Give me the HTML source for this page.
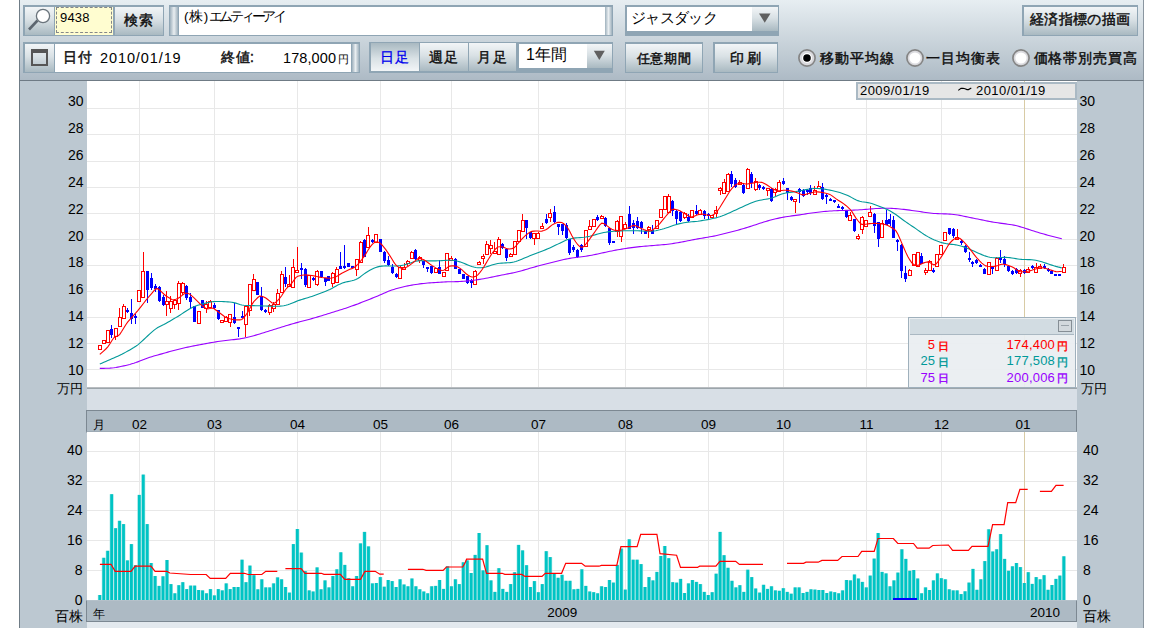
<!DOCTYPE html><html><head><meta charset="utf-8"><style>
*{margin:0;padding:0;box-sizing:border-box}
html,body{width:1151px;height:628px;overflow:hidden;background:#fff;font-family:"Liberation Sans",sans-serif;color:#000}
.a{position:absolute}
#tb{left:19px;top:0;width:1125px;height:81px;background:linear-gradient(#e7eef2,#d3dce2 35%,#c2cdd5 65%,#adbac5);border-left:1px solid #6f7c86;border-right:1px solid #8a96a0;border-bottom:1px solid #6f7b85}
.grp{background:#8fa5b4;}
.btn{background:linear-gradient(#f2f5f7,#d9e1e5 45%,#a9b9c1);font-weight:normal;-webkit-text-stroke:0.45px #111;font-size:13px;text-align:center;color:#111}
.bj{font-weight:normal;-webkit-text-stroke:0.45px #111;color:#111}
.btns{background:linear-gradient(#a9b9c1,#d9e1e5 55%,#f2f5f7);font-weight:bold;font-size:13px;text-align:center;color:#0000ee}
.grip{background:linear-gradient(90deg,#9fb1bd,#e9eef1 50%,#9fb1bd)}
.wh{background:#fff}
.lbl{font-size:13px;line-height:14px;color:#111}
</style></head><body>
<div id="tb" class="a"></div>
<div class="a grp" style="left:23px;top:5px;width:141px;height:31px"></div>
<div class="a btn" style="left:24.5px;top:6.5px;width:29px;height:28px"></div>
<svg class="a" style="left:24px;top:6px" width="30" height="29"><line x1="13.5" y1="14.5" x2="5" y2="23.5" stroke="#5c6670" stroke-width="2.6"/><circle cx="19" cy="10" r="6.6" fill="#fff" stroke="#6a747c" stroke-width="1.3"/></svg>
<div class="a" style="left:55px;top:6.5px;width:58px;height:28px;background:#fffdd0"></div>
<div class="a" style="left:56px;top:7px;width:56px;height:26px;border:1px dashed #858789"></div>
<div class="a" style="left:60px;top:11px;font-size:13px;line-height:14px;letter-spacing:0.2px">9438</div>
<div class="a btn" style="left:114.5px;top:6.5px;width:48px;height:28px;line-height:26px;font-size:14px;letter-spacing:1px;text-indent:1px">検索</div>
<div class="a grp" style="left:169px;top:5px;width:444px;height:31px"></div>
<div class="a grip" style="left:170px;top:6.5px;width:8px;height:28px"></div>
<div class="a wh" style="left:178.5px;top:6.5px;width:426px;height:28px"></div>
<div class="a grip" style="left:604.5px;top:6.5px;width:7px;height:28px"></div>
<div class="a" style="left:184px;top:8.5px;font-size:13.5px;line-height:15px;letter-spacing:-3.3px"><span style="letter-spacing:0.6px">(株)</span>エムティーアイ</div>
<div class="a grp" style="left:625px;top:5px;width:154px;height:31px"></div>
<div class="a wh" style="left:626.5px;top:6.5px;width:126px;height:24px"></div>
<div class="a btn" style="left:752px;top:6.5px;width:25.5px;height:24px"></div>
<svg class="a" style="left:752px;top:6px" width="26" height="25"><path d="M7 7.5 L18.5 7.5 L12.75 16.8 Z" fill="#606060"/></svg>
<div class="a" style="left:631px;top:9.5px;font-size:15px;line-height:16px;letter-spacing:-0.7px">ジャスダック</div>
<div class="a grp" style="left:1022px;top:5px;width:116px;height:31px"></div>
<div class="a btn" style="left:1023.5px;top:6.5px;width:113px;height:28px;line-height:26px;font-size:13.5px;letter-spacing:0.3px;text-indent:0.3px">経済指標の描画</div>
<div class="a grp" style="left:23px;top:42px;width:337px;height:31px"></div>
<div class="a btn" style="left:24.5px;top:43.5px;width:29px;height:28px"></div>
<div class="a" style="left:31px;top:49px;width:17px;height:17px;border:2px solid #565656;border-top-width:4px"></div>
<div class="a wh" style="left:55px;top:43.5px;width:296px;height:28px"></div>
<div class="a grip" style="left:351.5px;top:43.5px;width:7px;height:28px"></div>
<div class="a bj" style="left:63px;top:50px;font-size:14px;line-height:15px;letter-spacing:0.5px">日付</div>
<div class="a" style="left:100px;top:51px;font-size:14.5px;line-height:15px;letter-spacing:0.9px">2010/01/19</div>
<div class="a bj" style="left:221px;top:50px;font-size:14px;line-height:15px;letter-spacing:0.5px">終値:</div>
<div class="a" style="left:283px;top:51px;font-size:14.5px;line-height:15px;letter-spacing:0.1px">178,000<span style="font-size:10.5px;margin-left:2px">円</span></div>
<div class="a grp" style="left:369px;top:42px;width:244px;height:31px"></div>
<div class="a btns" style="left:371px;top:43px;width:48px;height:28px;line-height:29px;font-size:14px;letter-spacing:1.5px;font-weight:normal;-webkit-text-stroke:0.3px #00e">日足</div>
<div class="a btn" style="left:420px;top:43px;width:48px;height:28px;line-height:29px;font-size:14px;letter-spacing:1.5px">週足</div>
<div class="a btn" style="left:469px;top:43px;width:47px;height:28px;line-height:29px;font-size:14px;letter-spacing:1.5px">月足</div>
<div class="a wh" style="left:518.5px;top:43.5px;width:69px;height:24px"></div>
<div class="a btn" style="left:587px;top:43.5px;width:25px;height:24px"></div>
<svg class="a" style="left:587px;top:43px" width="25" height="25"><path d="M6.8 7.7 L17.8 7.7 L12.3 17.1 Z" fill="#606060"/></svg>
<div class="a" style="left:526px;top:46px;font-size:16px;line-height:18px">1年間</div>
<div class="a grp" style="left:624.5px;top:42px;width:78.5px;height:31px"></div>
<div class="a btn" style="left:626px;top:43.5px;width:75.5px;height:28px;line-height:29px;font-size:13px;letter-spacing:0.6px;text-indent:0.6px">任意期間</div>
<div class="a grp" style="left:713px;top:42px;width:65px;height:31px"></div>
<div class="a btn" style="left:714.5px;top:43.5px;width:62px;height:28px;line-height:29px;font-size:14px">印 刷</div>
<svg class="a" style="left:796.7px;top:47.7px" width="20" height="20"><circle cx="10" cy="10" r="8.1" fill="#dadade" stroke="#858585" stroke-width="1.7"/><circle cx="10" cy="10" r="5.0" fill="#fff"/><circle cx="10" cy="10" r="3.8" fill="#000"/></svg>
<div class="a bj" style="left:820px;top:50px;font-size:14px;line-height:16px;letter-spacing:0.95px">移動平均線</div>
<svg class="a" style="left:905.4px;top:47.7px" width="20" height="20"><circle cx="10" cy="10" r="8.1" fill="#dadade" stroke="#858585" stroke-width="1.7"/><circle cx="10" cy="10" r="5.6" fill="#fff"/></svg>
<div class="a bj" style="left:926px;top:50px;font-size:14px;line-height:16px;letter-spacing:0.95px">一目均衡表</div>
<svg class="a" style="left:1011.3px;top:47.7px" width="20" height="20"><circle cx="10" cy="10" r="8.1" fill="#dadade" stroke="#858585" stroke-width="1.7"/><circle cx="10" cy="10" r="5.6" fill="#fff"/></svg>
<div class="a bj" style="left:1033.5px;top:50px;font-size:14px;line-height:16px;letter-spacing:0.95px">価格帯別売買高</div>
<div class="a" style="left:19px;top:81px;width:1125px;height:547px;background:#bcc8d1;border-left:1px solid #6f7c86;border-right:1px solid #8a96a0"></div>
<svg class="a" style="left:0;top:0" width="1151" height="628"><rect x="87" y="81" width="990" height="307" fill="#fff"/><line x1="87" y1="108.5" x2="1077" y2="108.5" stroke="#e8e8e8"/><line x1="87" y1="134.5" x2="1077" y2="134.5" stroke="#e8e8e8"/><line x1="87" y1="161.5" x2="1077" y2="161.5" stroke="#e8e8e8"/><line x1="87" y1="187.5" x2="1077" y2="187.5" stroke="#e8e8e8"/><line x1="87" y1="213.5" x2="1077" y2="213.5" stroke="#e8e8e8"/><line x1="87" y1="239.5" x2="1077" y2="239.5" stroke="#e8e8e8"/><line x1="87" y1="265.5" x2="1077" y2="265.5" stroke="#e8e8e8"/><line x1="87" y1="291.5" x2="1077" y2="291.5" stroke="#e8e8e8"/><line x1="87" y1="317.5" x2="1077" y2="317.5" stroke="#e8e8e8"/><line x1="87" y1="343.5" x2="1077" y2="343.5" stroke="#e8e8e8"/><line x1="87" y1="369.5" x2="1077" y2="369.5" stroke="#e8e8e8"/><line x1="139.5" y1="81" x2="139.5" y2="388" stroke="#e8e8e8"/><line x1="139.5" y1="432" x2="139.5" y2="600" stroke="#e8e8e8"/><line x1="214.5" y1="81" x2="214.5" y2="388" stroke="#e8e8e8"/><line x1="214.5" y1="432" x2="214.5" y2="600" stroke="#e8e8e8"/><line x1="297.5" y1="81" x2="297.5" y2="388" stroke="#e8e8e8"/><line x1="297.5" y1="432" x2="297.5" y2="600" stroke="#e8e8e8"/><line x1="380.5" y1="81" x2="380.5" y2="388" stroke="#e8e8e8"/><line x1="380.5" y1="432" x2="380.5" y2="600" stroke="#e8e8e8"/><line x1="451.5" y1="81" x2="451.5" y2="388" stroke="#e8e8e8"/><line x1="451.5" y1="432" x2="451.5" y2="600" stroke="#e8e8e8"/><line x1="538.5" y1="81" x2="538.5" y2="388" stroke="#e8e8e8"/><line x1="538.5" y1="432" x2="538.5" y2="600" stroke="#e8e8e8"/><line x1="625.5" y1="81" x2="625.5" y2="388" stroke="#e8e8e8"/><line x1="625.5" y1="432" x2="625.5" y2="600" stroke="#e8e8e8"/><line x1="708.5" y1="81" x2="708.5" y2="388" stroke="#e8e8e8"/><line x1="708.5" y1="432" x2="708.5" y2="600" stroke="#e8e8e8"/><line x1="783.5" y1="81" x2="783.5" y2="388" stroke="#e8e8e8"/><line x1="783.5" y1="432" x2="783.5" y2="600" stroke="#e8e8e8"/><line x1="866.5" y1="81" x2="866.5" y2="388" stroke="#e8e8e8"/><line x1="866.5" y1="432" x2="866.5" y2="600" stroke="#e8e8e8"/><line x1="941.5" y1="81" x2="941.5" y2="388" stroke="#e8e8e8"/><line x1="941.5" y1="432" x2="941.5" y2="600" stroke="#e8e8e8"/><line x1="1024.5" y1="81" x2="1024.5" y2="388" stroke="#d8cba5"/><line x1="1024.5" y1="432" x2="1024.5" y2="600" stroke="#d8cba5"/><line x1="99.5" y1="345" x2="99.5" y2="349" stroke="#ff0000"/><rect x="98.5" y="345.5" width="3" height="4" fill="#fff" stroke="#ff0000"/><line x1="103.5" y1="340" x2="103.5" y2="343" stroke="#ff0000"/><rect x="102.5" y="340.5" width="3" height="3" fill="#fff" stroke="#ff0000"/><line x1="107.5" y1="330" x2="107.5" y2="342" stroke="#ff0000"/><rect x="106.5" y="330.5" width="3" height="12" fill="#fff" stroke="#ff0000"/><line x1="111.5" y1="325" x2="111.5" y2="338" stroke="#0000ff"/><rect x="110" y="329" width="3" height="6" fill="#0000ff"/><line x1="115.5" y1="328" x2="115.5" y2="340" stroke="#ff0000"/><rect x="114.5" y="328.5" width="3" height="8" fill="#fff" stroke="#ff0000"/><line x1="119.5" y1="308" x2="119.5" y2="326" stroke="#ff0000"/><rect x="118.5" y="317.5" width="3" height="9" fill="#fff" stroke="#ff0000"/><line x1="123.5" y1="304" x2="123.5" y2="318" stroke="#ff0000"/><rect x="122.5" y="306.5" width="3" height="12" fill="#fff" stroke="#ff0000"/><line x1="127.5" y1="308" x2="127.5" y2="313" stroke="#0000ff"/><rect x="126" y="310" width="3" height="2" fill="#0000ff"/><line x1="131.5" y1="299" x2="131.5" y2="324" stroke="#0000ff"/><rect x="130" y="313" width="3" height="6" fill="#0000ff"/><line x1="135.5" y1="314" x2="135.5" y2="324" stroke="#0000ff"/><rect x="134" y="316" width="3" height="2" fill="#0000ff"/><line x1="139.5" y1="290" x2="139.5" y2="301" stroke="#ff0000"/><rect x="137.5" y="290.5" width="3" height="11" fill="#fff" stroke="#ff0000"/><line x1="143.5" y1="252" x2="143.5" y2="297" stroke="#ff0000"/><rect x="141.5" y="271.5" width="3" height="26" fill="#fff" stroke="#ff0000"/><line x1="147.5" y1="271" x2="147.5" y2="303" stroke="#0000ff"/><rect x="146" y="271" width="3" height="19" fill="#0000ff"/><line x1="151.5" y1="273" x2="151.5" y2="290" stroke="#0000ff"/><rect x="150" y="278" width="3" height="10" fill="#0000ff"/><line x1="155.5" y1="284" x2="155.5" y2="292" stroke="#0000ff"/><rect x="154" y="286" width="3" height="3" fill="#0000ff"/><line x1="159.5" y1="286" x2="159.5" y2="302" stroke="#0000ff"/><rect x="158" y="287" width="3" height="14" fill="#0000ff"/><line x1="163.5" y1="295" x2="163.5" y2="306" stroke="#0000ff"/><rect x="162" y="297" width="3" height="8" fill="#0000ff"/><line x1="166.5" y1="291" x2="166.5" y2="316" stroke="#ff0000"/><rect x="165.5" y="301.5" width="3" height="3" fill="#fff" stroke="#ff0000"/><line x1="170.5" y1="296" x2="170.5" y2="313" stroke="#ff0000"/><rect x="169.5" y="301.5" width="3" height="7" fill="#fff" stroke="#ff0000"/><line x1="174.5" y1="299" x2="174.5" y2="309" stroke="#ff0000"/><rect x="173.5" y="300.5" width="3" height="4" fill="#fff" stroke="#ff0000"/><line x1="178.5" y1="281" x2="178.5" y2="310" stroke="#ff0000"/><rect x="177.5" y="283.5" width="3" height="20" fill="#fff" stroke="#ff0000"/><line x1="182.5" y1="282" x2="182.5" y2="295" stroke="#ff0000"/><rect x="181.5" y="283.5" width="3" height="9" fill="#fff" stroke="#ff0000"/><line x1="186.5" y1="285" x2="186.5" y2="300" stroke="#0000ff"/><rect x="185" y="286" width="3" height="12" fill="#0000ff"/><line x1="190.5" y1="293" x2="190.5" y2="308" stroke="#0000ff"/><rect x="189" y="297" width="3" height="5" fill="#0000ff"/><line x1="194.5" y1="306" x2="194.5" y2="322" stroke="#0000ff"/><rect x="193" y="306" width="3" height="16" fill="#0000ff"/><line x1="198.5" y1="311" x2="198.5" y2="323" stroke="#ff0000"/><rect x="197.5" y="311.5" width="3" height="12" fill="#fff" stroke="#ff0000"/><line x1="202.5" y1="300" x2="202.5" y2="308" stroke="#0000ff"/><rect x="201" y="300" width="3" height="8" fill="#0000ff"/><line x1="206.5" y1="301" x2="206.5" y2="313" stroke="#ff0000"/><rect x="204.5" y="304.5" width="3" height="4" fill="#fff" stroke="#ff0000"/><line x1="210.5" y1="300" x2="210.5" y2="308" stroke="#ff0000"/><rect x="208.5" y="301.5" width="3" height="6" fill="#fff" stroke="#ff0000"/><line x1="214.5" y1="303" x2="214.5" y2="309" stroke="#0000ff"/><rect x="213" y="305" width="3" height="3" fill="#0000ff"/><line x1="218.5" y1="310" x2="218.5" y2="320" stroke="#0000ff"/><rect x="217" y="310" width="3" height="9" fill="#0000ff"/><line x1="222.5" y1="320" x2="222.5" y2="322" stroke="#ff0000"/><rect x="220.5" y="320.5" width="3" height="2" fill="#fff" stroke="#ff0000"/><line x1="226.5" y1="316" x2="226.5" y2="322" stroke="#ff0000"/><rect x="224.5" y="317.5" width="3" height="4" fill="#fff" stroke="#ff0000"/><line x1="230.5" y1="314" x2="230.5" y2="327" stroke="#ff0000"/><rect x="228.5" y="314.5" width="3" height="8" fill="#fff" stroke="#ff0000"/><line x1="234.5" y1="303" x2="234.5" y2="324" stroke="#0000ff"/><rect x="233" y="317" width="3" height="6" fill="#0000ff"/><line x1="238.5" y1="327" x2="238.5" y2="337" stroke="#0000ff"/><rect x="237" y="327" width="3" height="2" fill="#0000ff"/><line x1="242.5" y1="311" x2="242.5" y2="318" stroke="#0000ff"/><rect x="241" y="316" width="3" height="2" fill="#0000ff"/><line x1="245.5" y1="306" x2="245.5" y2="337" stroke="#ff0000"/><rect x="244.5" y="306.5" width="3" height="18" fill="#fff" stroke="#ff0000"/><line x1="249.5" y1="284" x2="249.5" y2="316" stroke="#ff0000"/><rect x="248.5" y="284.5" width="3" height="26" fill="#fff" stroke="#ff0000"/><line x1="253.5" y1="274" x2="253.5" y2="291" stroke="#ff0000"/><rect x="252.5" y="279.5" width="3" height="11" fill="#fff" stroke="#ff0000"/><line x1="257.5" y1="282" x2="257.5" y2="295" stroke="#0000ff"/><rect x="256" y="282" width="3" height="13" fill="#0000ff"/><line x1="261.5" y1="287" x2="261.5" y2="311" stroke="#0000ff"/><rect x="260" y="296" width="3" height="14" fill="#0000ff"/><line x1="265.5" y1="309" x2="265.5" y2="313" stroke="#0000ff"/><rect x="264" y="310" width="3" height="2" fill="#0000ff"/><line x1="269.5" y1="304" x2="269.5" y2="315" stroke="#ff0000"/><rect x="268.5" y="305.5" width="3" height="7" fill="#fff" stroke="#ff0000"/><line x1="273.5" y1="302" x2="273.5" y2="312" stroke="#ff0000"/><rect x="272.5" y="304.5" width="3" height="4" fill="#fff" stroke="#ff0000"/><line x1="277.5" y1="289" x2="277.5" y2="305" stroke="#ff0000"/><rect x="276.5" y="293.5" width="3" height="11" fill="#fff" stroke="#ff0000"/><line x1="281.5" y1="271" x2="281.5" y2="292" stroke="#ff0000"/><rect x="280.5" y="274.5" width="3" height="18" fill="#fff" stroke="#ff0000"/><line x1="285.5" y1="267" x2="285.5" y2="287" stroke="#0000ff"/><rect x="284" y="277" width="3" height="7" fill="#0000ff"/><line x1="289.5" y1="275" x2="289.5" y2="286" stroke="#ff0000"/><rect x="287.5" y="284.5" width="3" height="2" fill="#fff" stroke="#ff0000"/><line x1="293.5" y1="259" x2="293.5" y2="287" stroke="#ff0000"/><rect x="291.5" y="267.5" width="3" height="20" fill="#fff" stroke="#ff0000"/><line x1="297.5" y1="247" x2="297.5" y2="272" stroke="#ff0000"/><rect x="295.5" y="270.5" width="3" height="2" fill="#fff" stroke="#ff0000"/><line x1="301.5" y1="263" x2="301.5" y2="279" stroke="#0000ff"/><rect x="300" y="268" width="3" height="2" fill="#0000ff"/><line x1="305.5" y1="268" x2="305.5" y2="287" stroke="#0000ff"/><rect x="304" y="269" width="3" height="16" fill="#0000ff"/><line x1="309.5" y1="275" x2="309.5" y2="287" stroke="#ff0000"/><rect x="307.5" y="275.5" width="3" height="12" fill="#fff" stroke="#ff0000"/><line x1="313.5" y1="277" x2="313.5" y2="281" stroke="#0000ff"/><rect x="312" y="278" width="3" height="2" fill="#0000ff"/><line x1="317.5" y1="270" x2="317.5" y2="286" stroke="#ff0000"/><rect x="315.5" y="271.5" width="3" height="13" fill="#fff" stroke="#ff0000"/><line x1="321.5" y1="271" x2="321.5" y2="278" stroke="#0000ff"/><rect x="320" y="271" width="3" height="6" fill="#0000ff"/><line x1="325.5" y1="278" x2="325.5" y2="286" stroke="#0000ff"/><rect x="324" y="278" width="3" height="4" fill="#0000ff"/><line x1="328.5" y1="276" x2="328.5" y2="281" stroke="#0000ff"/><rect x="327" y="276" width="3" height="5" fill="#0000ff"/><line x1="332.5" y1="272" x2="332.5" y2="287" stroke="#ff0000"/><rect x="331.5" y="273.5" width="3" height="10" fill="#fff" stroke="#ff0000"/><line x1="336.5" y1="267" x2="336.5" y2="282" stroke="#ff0000"/><rect x="335.5" y="269.5" width="3" height="13" fill="#fff" stroke="#ff0000"/><line x1="340.5" y1="252" x2="340.5" y2="269" stroke="#0000ff"/><rect x="339" y="266" width="3" height="3" fill="#0000ff"/><line x1="344.5" y1="245" x2="344.5" y2="269" stroke="#0000ff"/><rect x="343" y="266" width="3" height="2" fill="#0000ff"/><line x1="348.5" y1="263" x2="348.5" y2="267" stroke="#0000ff"/><rect x="347" y="263" width="3" height="4" fill="#0000ff"/><line x1="352.5" y1="266" x2="352.5" y2="268" stroke="#0000ff"/><rect x="351" y="266" width="3" height="2" fill="#0000ff"/><line x1="356.5" y1="259" x2="356.5" y2="276" stroke="#ff0000"/><rect x="355.5" y="259.5" width="3" height="10" fill="#fff" stroke="#ff0000"/><line x1="360.5" y1="241" x2="360.5" y2="263" stroke="#ff0000"/><rect x="359.5" y="242.5" width="3" height="20" fill="#fff" stroke="#ff0000"/><line x1="364.5" y1="239" x2="364.5" y2="257" stroke="#0000ff"/><rect x="363" y="240" width="3" height="17" fill="#0000ff"/><line x1="368.5" y1="227" x2="368.5" y2="247" stroke="#ff0000"/><rect x="366.5" y="235.5" width="3" height="12" fill="#fff" stroke="#ff0000"/><line x1="372.5" y1="239" x2="372.5" y2="243" stroke="#0000ff"/><rect x="371" y="240" width="3" height="2" fill="#0000ff"/><line x1="376.5" y1="234" x2="376.5" y2="242" stroke="#ff0000"/><rect x="374.5" y="234.5" width="3" height="8" fill="#fff" stroke="#ff0000"/><line x1="380.5" y1="239" x2="380.5" y2="252" stroke="#0000ff"/><rect x="379" y="239" width="3" height="13" fill="#0000ff"/><line x1="384.5" y1="251" x2="384.5" y2="263" stroke="#0000ff"/><rect x="383" y="252" width="3" height="9" fill="#0000ff"/><line x1="388.5" y1="256" x2="388.5" y2="266" stroke="#0000ff"/><rect x="387" y="260" width="3" height="5" fill="#0000ff"/><line x1="392.5" y1="264" x2="392.5" y2="274" stroke="#0000ff"/><rect x="391" y="267" width="3" height="6" fill="#0000ff"/><line x1="396.5" y1="273" x2="396.5" y2="278" stroke="#0000ff"/><rect x="395" y="274" width="3" height="3" fill="#0000ff"/><line x1="400.5" y1="266" x2="400.5" y2="279" stroke="#ff0000"/><rect x="398.5" y="267.5" width="3" height="11" fill="#fff" stroke="#ff0000"/><line x1="404.5" y1="263" x2="404.5" y2="270" stroke="#ff0000"/><rect x="402.5" y="267.5" width="3" height="2" fill="#fff" stroke="#ff0000"/><line x1="407.5" y1="260" x2="407.5" y2="266" stroke="#ff0000"/><rect x="406.5" y="261.5" width="3" height="2" fill="#fff" stroke="#ff0000"/><line x1="411.5" y1="251" x2="411.5" y2="258" stroke="#ff0000"/><rect x="410.5" y="252.5" width="3" height="6" fill="#fff" stroke="#ff0000"/><line x1="415.5" y1="249" x2="415.5" y2="260" stroke="#0000ff"/><rect x="414" y="250" width="3" height="9" fill="#0000ff"/><line x1="419.5" y1="256" x2="419.5" y2="263" stroke="#ff0000"/><rect x="418.5" y="257.5" width="3" height="3" fill="#fff" stroke="#ff0000"/><line x1="423.5" y1="261" x2="423.5" y2="268" stroke="#0000ff"/><rect x="422" y="261" width="3" height="4" fill="#0000ff"/><line x1="427.5" y1="267" x2="427.5" y2="272" stroke="#0000ff"/><rect x="426" y="267" width="3" height="2" fill="#0000ff"/><line x1="431.5" y1="266" x2="431.5" y2="274" stroke="#0000ff"/><rect x="430" y="266" width="3" height="7" fill="#0000ff"/><line x1="435.5" y1="268" x2="435.5" y2="272" stroke="#ff0000"/><rect x="434.5" y="268.5" width="3" height="4" fill="#fff" stroke="#ff0000"/><line x1="439.5" y1="260" x2="439.5" y2="274" stroke="#0000ff"/><rect x="438" y="267" width="3" height="7" fill="#0000ff"/><line x1="443.5" y1="272" x2="443.5" y2="276" stroke="#ff0000"/><rect x="442.5" y="272.5" width="3" height="4" fill="#fff" stroke="#ff0000"/><line x1="447.5" y1="253" x2="447.5" y2="270" stroke="#ff0000"/><rect x="445.5" y="253.5" width="3" height="17" fill="#fff" stroke="#ff0000"/><line x1="451.5" y1="256" x2="451.5" y2="261" stroke="#ff0000"/><rect x="449.5" y="258.5" width="3" height="2" fill="#fff" stroke="#ff0000"/><line x1="455.5" y1="258" x2="455.5" y2="269" stroke="#0000ff"/><rect x="454" y="259" width="3" height="10" fill="#0000ff"/><line x1="459.5" y1="269" x2="459.5" y2="274" stroke="#0000ff"/><rect x="458" y="269" width="3" height="5" fill="#0000ff"/><line x1="463.5" y1="274" x2="463.5" y2="279" stroke="#0000ff"/><rect x="462" y="274" width="3" height="5" fill="#0000ff"/><line x1="467.5" y1="276" x2="467.5" y2="284" stroke="#0000ff"/><rect x="466" y="276" width="3" height="7" fill="#0000ff"/><line x1="471.5" y1="279" x2="471.5" y2="288" stroke="#0000ff"/><rect x="470" y="280" width="3" height="3" fill="#0000ff"/><line x1="475.5" y1="270" x2="475.5" y2="284" stroke="#ff0000"/><rect x="473.5" y="271.5" width="3" height="13" fill="#fff" stroke="#ff0000"/><line x1="479.5" y1="261" x2="479.5" y2="264" stroke="#ff0000"/><rect x="477.5" y="262.5" width="3" height="2" fill="#fff" stroke="#ff0000"/><line x1="483.5" y1="254" x2="483.5" y2="264" stroke="#ff0000"/><rect x="481.5" y="256.5" width="3" height="2" fill="#fff" stroke="#ff0000"/><line x1="486.5" y1="241" x2="486.5" y2="254" stroke="#ff0000"/><rect x="485.5" y="244.5" width="3" height="10" fill="#fff" stroke="#ff0000"/><line x1="490.5" y1="240" x2="490.5" y2="254" stroke="#ff0000"/><rect x="489.5" y="245.5" width="3" height="3" fill="#fff" stroke="#ff0000"/><line x1="494.5" y1="242" x2="494.5" y2="254" stroke="#ff0000"/><rect x="493.5" y="251.5" width="3" height="2" fill="#fff" stroke="#ff0000"/><line x1="498.5" y1="237" x2="498.5" y2="254" stroke="#ff0000"/><rect x="497.5" y="239.5" width="3" height="15" fill="#fff" stroke="#ff0000"/><line x1="502.5" y1="243" x2="502.5" y2="249" stroke="#0000ff"/><rect x="501" y="244" width="3" height="4" fill="#0000ff"/><line x1="506.5" y1="248" x2="506.5" y2="261" stroke="#0000ff"/><rect x="505" y="249" width="3" height="9" fill="#0000ff"/><line x1="510.5" y1="253" x2="510.5" y2="256" stroke="#ff0000"/><rect x="509.5" y="254.5" width="3" height="2" fill="#fff" stroke="#ff0000"/><line x1="514.5" y1="241" x2="514.5" y2="254" stroke="#ff0000"/><rect x="513.5" y="241.5" width="3" height="13" fill="#fff" stroke="#ff0000"/><line x1="518.5" y1="230" x2="518.5" y2="241" stroke="#ff0000"/><rect x="517.5" y="230.5" width="3" height="11" fill="#fff" stroke="#ff0000"/><line x1="522.5" y1="214" x2="522.5" y2="231" stroke="#ff0000"/><rect x="521.5" y="220.5" width="3" height="11" fill="#fff" stroke="#ff0000"/><line x1="526.5" y1="220" x2="526.5" y2="239" stroke="#0000ff"/><rect x="525" y="220" width="3" height="8" fill="#0000ff"/><line x1="530.5" y1="232" x2="530.5" y2="239" stroke="#0000ff"/><rect x="529" y="232" width="3" height="6" fill="#0000ff"/><line x1="534.5" y1="233" x2="534.5" y2="245" stroke="#ff0000"/><rect x="532.5" y="233.5" width="3" height="5" fill="#fff" stroke="#ff0000"/><line x1="538.5" y1="232" x2="538.5" y2="238" stroke="#ff0000"/><rect x="536.5" y="233.5" width="3" height="5" fill="#fff" stroke="#ff0000"/><line x1="542.5" y1="223" x2="542.5" y2="229" stroke="#ff0000"/><rect x="540.5" y="226.5" width="3" height="2" fill="#fff" stroke="#ff0000"/><line x1="546.5" y1="214" x2="546.5" y2="224" stroke="#0000ff"/><rect x="545" y="219" width="3" height="4" fill="#0000ff"/><line x1="550.5" y1="209" x2="550.5" y2="222" stroke="#ff0000"/><rect x="548.5" y="213.5" width="3" height="4" fill="#fff" stroke="#ff0000"/><line x1="554.5" y1="206" x2="554.5" y2="223" stroke="#0000ff"/><rect x="553" y="212" width="3" height="10" fill="#0000ff"/><line x1="558.5" y1="224" x2="558.5" y2="235" stroke="#0000ff"/><rect x="557" y="224" width="3" height="3" fill="#0000ff"/><line x1="562.5" y1="224" x2="562.5" y2="235" stroke="#0000ff"/><rect x="561" y="224" width="3" height="7" fill="#0000ff"/><line x1="566.5" y1="223" x2="566.5" y2="239" stroke="#0000ff"/><rect x="565" y="225" width="3" height="13" fill="#0000ff"/><line x1="569.5" y1="239" x2="569.5" y2="255" stroke="#0000ff"/><rect x="568" y="239" width="3" height="14" fill="#0000ff"/><line x1="573.5" y1="245" x2="573.5" y2="252" stroke="#0000ff"/><rect x="572" y="247" width="3" height="3" fill="#0000ff"/><line x1="577.5" y1="249" x2="577.5" y2="258" stroke="#0000ff"/><rect x="576" y="250" width="3" height="7" fill="#0000ff"/><line x1="581.5" y1="244" x2="581.5" y2="252" stroke="#0000ff"/><rect x="580" y="245" width="3" height="5" fill="#0000ff"/><line x1="585.5" y1="230" x2="585.5" y2="246" stroke="#ff0000"/><rect x="584.5" y="230.5" width="3" height="16" fill="#fff" stroke="#ff0000"/><line x1="589.5" y1="220" x2="589.5" y2="229" stroke="#ff0000"/><rect x="588.5" y="226.5" width="3" height="3" fill="#fff" stroke="#ff0000"/><line x1="593.5" y1="219" x2="593.5" y2="226" stroke="#ff0000"/><rect x="592.5" y="219.5" width="3" height="7" fill="#fff" stroke="#ff0000"/><line x1="597.5" y1="215" x2="597.5" y2="221" stroke="#0000ff"/><rect x="596" y="217" width="3" height="3" fill="#0000ff"/><line x1="601.5" y1="215" x2="601.5" y2="218" stroke="#ff0000"/><rect x="600.5" y="216.5" width="3" height="2" fill="#fff" stroke="#ff0000"/><line x1="605.5" y1="217" x2="605.5" y2="227" stroke="#0000ff"/><rect x="604" y="218" width="3" height="8" fill="#0000ff"/><line x1="609.5" y1="228" x2="609.5" y2="245" stroke="#0000ff"/><rect x="608" y="228" width="3" height="15" fill="#0000ff"/><line x1="613.5" y1="241" x2="613.5" y2="243" stroke="#0000ff"/><rect x="612" y="241" width="3" height="2" fill="#0000ff"/><line x1="617.5" y1="220" x2="617.5" y2="237" stroke="#ff0000"/><rect x="615.5" y="221.5" width="3" height="10" fill="#fff" stroke="#ff0000"/><line x1="621.5" y1="216" x2="621.5" y2="242" stroke="#ff0000"/><rect x="619.5" y="216.5" width="3" height="20" fill="#fff" stroke="#ff0000"/><line x1="625.5" y1="222" x2="625.5" y2="228" stroke="#ff0000"/><rect x="623.5" y="224.5" width="3" height="4" fill="#fff" stroke="#ff0000"/><line x1="629.5" y1="206" x2="629.5" y2="229" stroke="#0000ff"/><rect x="628" y="214" width="3" height="15" fill="#0000ff"/><line x1="633.5" y1="220" x2="633.5" y2="234" stroke="#0000ff"/><rect x="632" y="223" width="3" height="5" fill="#0000ff"/><line x1="637.5" y1="217" x2="637.5" y2="229" stroke="#0000ff"/><rect x="636" y="221" width="3" height="7" fill="#0000ff"/><line x1="641.5" y1="221" x2="641.5" y2="234" stroke="#0000ff"/><rect x="640" y="222" width="3" height="6" fill="#0000ff"/><line x1="645.5" y1="231" x2="645.5" y2="234" stroke="#0000ff"/><rect x="644" y="231" width="3" height="3" fill="#0000ff"/><line x1="648.5" y1="226" x2="648.5" y2="238" stroke="#ff0000"/><rect x="647.5" y="227.5" width="3" height="2" fill="#fff" stroke="#ff0000"/><line x1="652.5" y1="225" x2="652.5" y2="234" stroke="#0000ff"/><rect x="651" y="230" width="3" height="4" fill="#0000ff"/><line x1="656.5" y1="220" x2="656.5" y2="228" stroke="#ff0000"/><rect x="655.5" y="220.5" width="3" height="8" fill="#fff" stroke="#ff0000"/><line x1="660.5" y1="209" x2="660.5" y2="217" stroke="#ff0000"/><rect x="659.5" y="209.5" width="3" height="8" fill="#fff" stroke="#ff0000"/><line x1="664.5" y1="196" x2="664.5" y2="209" stroke="#ff0000"/><rect x="663.5" y="196.5" width="3" height="13" fill="#fff" stroke="#ff0000"/><line x1="668.5" y1="194" x2="668.5" y2="212" stroke="#ff0000"/><rect x="667.5" y="196.5" width="3" height="16" fill="#fff" stroke="#ff0000"/><line x1="672.5" y1="200" x2="672.5" y2="216" stroke="#0000ff"/><rect x="671" y="201" width="3" height="10" fill="#0000ff"/><line x1="676.5" y1="210" x2="676.5" y2="225" stroke="#0000ff"/><rect x="675" y="211" width="3" height="8" fill="#0000ff"/><line x1="680.5" y1="211" x2="680.5" y2="222" stroke="#0000ff"/><rect x="679" y="212" width="3" height="9" fill="#0000ff"/><line x1="684.5" y1="212" x2="684.5" y2="219" stroke="#ff0000"/><rect x="683.5" y="213.5" width="3" height="4" fill="#fff" stroke="#ff0000"/><line x1="688.5" y1="214" x2="688.5" y2="222" stroke="#0000ff"/><rect x="687" y="217" width="3" height="4" fill="#0000ff"/><line x1="692.5" y1="210" x2="692.5" y2="217" stroke="#ff0000"/><rect x="690.5" y="210.5" width="3" height="7" fill="#fff" stroke="#ff0000"/><line x1="696.5" y1="205" x2="696.5" y2="215" stroke="#0000ff"/><rect x="695" y="211" width="3" height="3" fill="#0000ff"/><line x1="700.5" y1="209" x2="700.5" y2="215" stroke="#ff0000"/><rect x="698.5" y="210.5" width="3" height="4" fill="#fff" stroke="#ff0000"/><line x1="704.5" y1="210" x2="704.5" y2="219" stroke="#0000ff"/><rect x="703" y="211" width="3" height="5" fill="#0000ff"/><line x1="708.5" y1="213" x2="708.5" y2="219" stroke="#0000ff"/><rect x="707" y="214" width="3" height="2" fill="#0000ff"/><line x1="712.5" y1="215" x2="712.5" y2="217" stroke="#ff0000"/><rect x="710.5" y="215.5" width="3" height="2" fill="#fff" stroke="#ff0000"/><line x1="716.5" y1="206" x2="716.5" y2="217" stroke="#ff0000"/><rect x="714.5" y="210.5" width="3" height="3" fill="#fff" stroke="#ff0000"/><line x1="720.5" y1="187" x2="720.5" y2="195" stroke="#ff0000"/><rect x="718.5" y="188.5" width="3" height="2" fill="#fff" stroke="#ff0000"/><line x1="724.5" y1="179" x2="724.5" y2="193" stroke="#ff0000"/><rect x="722.5" y="182.5" width="3" height="11" fill="#fff" stroke="#ff0000"/><line x1="728.5" y1="173" x2="728.5" y2="191" stroke="#ff0000"/><rect x="726.5" y="174.5" width="3" height="17" fill="#fff" stroke="#ff0000"/><line x1="731.5" y1="171" x2="731.5" y2="187" stroke="#0000ff"/><rect x="730" y="174" width="3" height="10" fill="#0000ff"/><line x1="735.5" y1="178" x2="735.5" y2="188" stroke="#0000ff"/><rect x="734" y="180" width="3" height="7" fill="#0000ff"/><line x1="739.5" y1="180" x2="739.5" y2="185" stroke="#ff0000"/><rect x="738.5" y="182.5" width="3" height="2" fill="#fff" stroke="#ff0000"/><line x1="743.5" y1="184" x2="743.5" y2="194" stroke="#0000ff"/><rect x="742" y="185" width="3" height="8" fill="#0000ff"/><line x1="747.5" y1="168" x2="747.5" y2="188" stroke="#ff0000"/><rect x="746.5" y="169.5" width="3" height="19" fill="#fff" stroke="#ff0000"/><line x1="751.5" y1="172" x2="751.5" y2="188" stroke="#0000ff"/><rect x="750" y="174" width="3" height="9" fill="#0000ff"/><line x1="755.5" y1="178" x2="755.5" y2="191" stroke="#ff0000"/><rect x="754.5" y="181.5" width="3" height="8" fill="#fff" stroke="#ff0000"/><line x1="759.5" y1="184" x2="759.5" y2="190" stroke="#0000ff"/><rect x="758" y="185" width="3" height="3" fill="#0000ff"/><line x1="763.5" y1="186" x2="763.5" y2="190" stroke="#0000ff"/><rect x="762" y="187" width="3" height="2" fill="#0000ff"/><line x1="767.5" y1="188" x2="767.5" y2="196" stroke="#ff0000"/><rect x="766.5" y="188.5" width="3" height="2" fill="#fff" stroke="#ff0000"/><line x1="771.5" y1="188" x2="771.5" y2="202" stroke="#0000ff"/><rect x="770" y="189" width="3" height="12" fill="#0000ff"/><line x1="775.5" y1="188" x2="775.5" y2="196" stroke="#ff0000"/><rect x="773.5" y="189.5" width="3" height="3" fill="#fff" stroke="#ff0000"/><line x1="779.5" y1="180" x2="779.5" y2="192" stroke="#ff0000"/><rect x="777.5" y="182.5" width="3" height="9" fill="#fff" stroke="#ff0000"/><line x1="783.5" y1="178" x2="783.5" y2="185" stroke="#0000ff"/><rect x="782" y="181" width="3" height="3" fill="#0000ff"/><line x1="787.5" y1="188" x2="787.5" y2="200" stroke="#0000ff"/><rect x="786" y="188" width="3" height="5" fill="#0000ff"/><line x1="791.5" y1="196" x2="791.5" y2="201" stroke="#0000ff"/><rect x="790" y="197" width="3" height="3" fill="#0000ff"/><line x1="795.5" y1="199" x2="795.5" y2="213" stroke="#ff0000"/><rect x="793.5" y="199.5" width="3" height="2" fill="#fff" stroke="#ff0000"/><line x1="799.5" y1="188" x2="799.5" y2="203" stroke="#0000ff"/><rect x="798" y="189" width="3" height="3" fill="#0000ff"/><line x1="803.5" y1="189" x2="803.5" y2="197" stroke="#0000ff"/><rect x="802" y="190" width="3" height="6" fill="#0000ff"/><line x1="807.5" y1="189" x2="807.5" y2="195" stroke="#0000ff"/><rect x="806" y="190" width="3" height="2" fill="#0000ff"/><line x1="810.5" y1="185" x2="810.5" y2="195" stroke="#0000ff"/><rect x="809" y="188" width="3" height="5" fill="#0000ff"/><line x1="814.5" y1="186" x2="814.5" y2="194" stroke="#ff0000"/><rect x="813.5" y="190.5" width="3" height="4" fill="#fff" stroke="#ff0000"/><line x1="818.5" y1="181" x2="818.5" y2="188" stroke="#ff0000"/><rect x="817.5" y="186.5" width="3" height="2" fill="#fff" stroke="#ff0000"/><line x1="822.5" y1="183" x2="822.5" y2="200" stroke="#0000ff"/><rect x="821" y="187" width="3" height="12" fill="#0000ff"/><line x1="826.5" y1="194" x2="826.5" y2="204" stroke="#0000ff"/><rect x="825" y="195" width="3" height="2" fill="#0000ff"/><line x1="830.5" y1="198" x2="830.5" y2="201" stroke="#0000ff"/><rect x="829" y="199" width="3" height="2" fill="#0000ff"/><line x1="834.5" y1="200" x2="834.5" y2="203" stroke="#0000ff"/><rect x="833" y="200" width="3" height="2" fill="#0000ff"/><line x1="838.5" y1="204" x2="838.5" y2="208" stroke="#0000ff"/><rect x="837" y="206" width="3" height="2" fill="#0000ff"/><line x1="842.5" y1="206" x2="842.5" y2="210" stroke="#0000ff"/><rect x="841" y="207" width="3" height="2" fill="#0000ff"/><line x1="846.5" y1="210" x2="846.5" y2="218" stroke="#0000ff"/><rect x="845" y="210" width="3" height="7" fill="#0000ff"/><line x1="850.5" y1="212" x2="850.5" y2="220" stroke="#ff0000"/><rect x="848.5" y="215.5" width="3" height="5" fill="#fff" stroke="#ff0000"/><line x1="854.5" y1="219" x2="854.5" y2="232" stroke="#0000ff"/><rect x="853" y="219" width="3" height="12" fill="#0000ff"/><line x1="858.5" y1="234" x2="858.5" y2="240" stroke="#ff0000"/><rect x="856.5" y="236.5" width="3" height="2" fill="#fff" stroke="#ff0000"/><line x1="862.5" y1="216" x2="862.5" y2="234" stroke="#ff0000"/><rect x="860.5" y="217.5" width="3" height="12" fill="#fff" stroke="#ff0000"/><line x1="866.5" y1="220" x2="866.5" y2="226" stroke="#ff0000"/><rect x="864.5" y="220.5" width="3" height="6" fill="#fff" stroke="#ff0000"/><line x1="870.5" y1="206" x2="870.5" y2="216" stroke="#ff0000"/><rect x="868.5" y="212.5" width="3" height="4" fill="#fff" stroke="#ff0000"/><line x1="874.5" y1="213" x2="874.5" y2="233" stroke="#0000ff"/><rect x="873" y="214" width="3" height="12" fill="#0000ff"/><line x1="878.5" y1="222" x2="878.5" y2="247" stroke="#0000ff"/><rect x="877" y="222" width="3" height="17" fill="#0000ff"/><line x1="882.5" y1="220" x2="882.5" y2="237" stroke="#ff0000"/><rect x="880.5" y="223.5" width="3" height="14" fill="#fff" stroke="#ff0000"/><line x1="886.5" y1="210" x2="886.5" y2="225" stroke="#0000ff"/><rect x="885" y="220" width="3" height="5" fill="#0000ff"/><line x1="890.5" y1="214" x2="890.5" y2="226" stroke="#0000ff"/><rect x="888" y="219" width="3" height="5" fill="#0000ff"/><line x1="893.5" y1="216" x2="893.5" y2="238" stroke="#0000ff"/><rect x="892" y="220" width="3" height="18" fill="#0000ff"/><line x1="897.5" y1="239" x2="897.5" y2="251" stroke="#0000ff"/><rect x="896" y="240" width="3" height="2" fill="#0000ff"/><line x1="901.5" y1="244" x2="901.5" y2="278" stroke="#0000ff"/><rect x="900" y="245" width="3" height="26" fill="#0000ff"/><line x1="905.5" y1="266" x2="905.5" y2="282" stroke="#0000ff"/><rect x="904" y="273" width="3" height="6" fill="#0000ff"/><line x1="909.5" y1="269" x2="909.5" y2="275" stroke="#ff0000"/><rect x="908.5" y="270.5" width="3" height="5" fill="#fff" stroke="#ff0000"/><line x1="913.5" y1="254" x2="913.5" y2="265" stroke="#ff0000"/><rect x="912.5" y="254.5" width="3" height="11" fill="#fff" stroke="#ff0000"/><line x1="917.5" y1="252" x2="917.5" y2="266" stroke="#ff0000"/><rect x="916.5" y="252.5" width="3" height="14" fill="#fff" stroke="#ff0000"/><line x1="921.5" y1="253" x2="921.5" y2="264" stroke="#0000ff"/><rect x="920" y="256" width="3" height="8" fill="#0000ff"/><line x1="925.5" y1="268" x2="925.5" y2="275" stroke="#ff0000"/><rect x="924.5" y="270.5" width="3" height="2" fill="#fff" stroke="#ff0000"/><line x1="929.5" y1="260" x2="929.5" y2="270" stroke="#ff0000"/><rect x="928.5" y="261.5" width="3" height="9" fill="#fff" stroke="#ff0000"/><line x1="933.5" y1="268" x2="933.5" y2="273" stroke="#0000ff"/><rect x="932" y="270" width="3" height="2" fill="#0000ff"/><line x1="937.5" y1="254" x2="937.5" y2="266" stroke="#ff0000"/><rect x="935.5" y="254.5" width="3" height="12" fill="#fff" stroke="#ff0000"/><line x1="941.5" y1="245" x2="941.5" y2="254" stroke="#ff0000"/><rect x="939.5" y="245.5" width="3" height="9" fill="#fff" stroke="#ff0000"/><line x1="945.5" y1="232" x2="945.5" y2="240" stroke="#ff0000"/><rect x="943.5" y="232.5" width="3" height="8" fill="#fff" stroke="#ff0000"/><line x1="949.5" y1="228" x2="949.5" y2="235" stroke="#0000ff"/><rect x="948" y="228" width="3" height="6" fill="#0000ff"/><line x1="953.5" y1="228" x2="953.5" y2="238" stroke="#0000ff"/><rect x="952" y="229" width="3" height="7" fill="#0000ff"/><line x1="957.5" y1="229" x2="957.5" y2="238" stroke="#ff0000"/><rect x="955.5" y="237.5" width="3" height="2" fill="#fff" stroke="#ff0000"/><line x1="961.5" y1="239" x2="961.5" y2="245" stroke="#0000ff"/><rect x="960" y="241" width="3" height="2" fill="#0000ff"/><line x1="965.5" y1="245" x2="965.5" y2="253" stroke="#0000ff"/><rect x="964" y="246" width="3" height="6" fill="#0000ff"/><line x1="969.5" y1="252" x2="969.5" y2="262" stroke="#0000ff"/><rect x="968" y="258" width="3" height="2" fill="#0000ff"/><line x1="972.5" y1="261" x2="972.5" y2="267" stroke="#0000ff"/><rect x="971" y="262" width="3" height="2" fill="#0000ff"/><line x1="976.5" y1="259" x2="976.5" y2="264" stroke="#0000ff"/><rect x="975" y="260" width="3" height="3" fill="#0000ff"/><line x1="980.5" y1="264" x2="980.5" y2="266" stroke="#0000ff"/><rect x="979" y="265" width="3" height="2" fill="#0000ff"/><line x1="984.5" y1="268" x2="984.5" y2="274" stroke="#0000ff"/><rect x="983" y="269" width="3" height="5" fill="#0000ff"/><line x1="988.5" y1="262" x2="988.5" y2="274" stroke="#ff0000"/><rect x="987.5" y="262.5" width="3" height="12" fill="#fff" stroke="#ff0000"/><line x1="992.5" y1="266" x2="992.5" y2="274" stroke="#0000ff"/><rect x="991" y="266" width="3" height="3" fill="#0000ff"/><line x1="996.5" y1="257" x2="996.5" y2="271" stroke="#ff0000"/><rect x="995.5" y="258.5" width="3" height="12" fill="#fff" stroke="#ff0000"/><line x1="1000.5" y1="250" x2="1000.5" y2="263" stroke="#0000ff"/><rect x="999" y="258" width="3" height="2" fill="#0000ff"/><line x1="1004.5" y1="256" x2="1004.5" y2="267" stroke="#0000ff"/><rect x="1003" y="259" width="3" height="5" fill="#0000ff"/><line x1="1008.5" y1="266" x2="1008.5" y2="272" stroke="#0000ff"/><rect x="1007" y="266" width="3" height="5" fill="#0000ff"/><line x1="1012.5" y1="270" x2="1012.5" y2="275" stroke="#0000ff"/><rect x="1011" y="271" width="3" height="3" fill="#0000ff"/><line x1="1016.5" y1="268" x2="1016.5" y2="274" stroke="#0000ff"/><rect x="1015" y="269" width="3" height="4" fill="#0000ff"/><line x1="1020.5" y1="269" x2="1020.5" y2="277" stroke="#ff0000"/><rect x="1018.5" y="270.5" width="3" height="3" fill="#fff" stroke="#ff0000"/><line x1="1024.5" y1="269" x2="1024.5" y2="274" stroke="#0000ff"/><rect x="1023" y="270" width="3" height="3" fill="#0000ff"/><line x1="1028.5" y1="267" x2="1028.5" y2="273" stroke="#ff0000"/><rect x="1026.5" y="269.5" width="3" height="3" fill="#fff" stroke="#ff0000"/><line x1="1032.5" y1="265" x2="1032.5" y2="269" stroke="#0000ff"/><rect x="1031" y="266" width="3" height="2" fill="#0000ff"/><line x1="1036.5" y1="263" x2="1036.5" y2="272" stroke="#ff0000"/><rect x="1034.5" y="267.5" width="3" height="5" fill="#fff" stroke="#ff0000"/><line x1="1040.5" y1="264" x2="1040.5" y2="269" stroke="#ff0000"/><rect x="1038.5" y="266.5" width="3" height="2" fill="#fff" stroke="#ff0000"/><line x1="1044.5" y1="264" x2="1044.5" y2="269" stroke="#0000ff"/><rect x="1043" y="266" width="3" height="2" fill="#0000ff"/><line x1="1048.5" y1="268" x2="1048.5" y2="272" stroke="#0000ff"/><rect x="1047" y="269" width="3" height="2" fill="#0000ff"/><line x1="1051.5" y1="270" x2="1051.5" y2="274" stroke="#0000ff"/><rect x="1050" y="271" width="3" height="3" fill="#0000ff"/><line x1="1055.5" y1="274" x2="1055.5" y2="276" stroke="#0000ff"/><rect x="1054" y="274" width="3" height="2" fill="#0000ff"/><line x1="1059.5" y1="274" x2="1059.5" y2="276" stroke="#0000ff"/><rect x="1058" y="274" width="3" height="2" fill="#0000ff"/><line x1="1063.5" y1="264" x2="1063.5" y2="272" stroke="#ff0000"/><rect x="1062.5" y="267.5" width="3" height="5" fill="#fff" stroke="#ff0000"/><path d="M99.8,368.34 L101.8,368.34 L103.8,368.33 L105.8,368.30 L107.8,368.25 L109.8,368.15 L111.8,367.99 L113.8,367.77 L115.8,367.48 L117.8,367.13 L119.8,366.74 L121.8,366.32 L123.8,365.88 L125.8,365.42 L127.8,364.93 L129.8,364.41 L131.8,363.84 L133.8,363.23 L135.8,362.57 L137.8,361.86 L139.8,361.11 L141.8,360.33 L143.8,359.55 L145.8,358.78 L147.8,358.03 L149.8,357.32 L151.8,356.65 L153.8,356.04 L155.8,355.47 L157.8,354.94 L159.8,354.40 L161.8,353.85 L163.8,353.28 L165.8,352.69 L167.8,352.11 L169.8,351.55 L171.8,351.02 L173.8,350.50 L175.8,350.00 L177.8,349.50 L179.8,349.01 L181.8,348.52 L183.8,348.04 L185.8,347.57 L187.8,347.12 L189.8,346.69 L191.8,346.28 L193.8,345.88 L195.8,345.49 L197.8,345.11 L199.8,344.74 L201.8,344.36 L203.8,343.99 L205.8,343.61 L207.8,343.24 L209.8,342.88 L211.8,342.52 L213.8,342.18 L215.8,341.85 L217.8,341.55 L219.8,341.26 L221.8,340.99 L223.8,340.74 L225.8,340.49 L227.8,340.26 L229.8,340.03 L231.8,339.81 L233.8,339.59 L235.8,339.37 L237.8,339.12 L239.8,338.84 L241.8,338.51 L243.8,338.15 L245.8,337.74 L247.8,337.29 L249.8,336.81 L251.8,336.29 L253.8,335.73 L255.8,335.15 L257.8,334.55 L259.8,333.94 L261.8,333.32 L263.8,332.69 L265.8,332.07 L267.8,331.44 L269.8,330.82 L271.8,330.19 L273.8,329.57 L275.8,328.94 L277.8,328.32 L279.8,327.70 L281.8,327.07 L283.8,326.45 L285.8,325.83 L287.8,325.22 L289.8,324.61 L291.8,324.02 L293.8,323.45 L295.8,322.90 L297.8,322.35 L299.8,321.82 L301.8,321.30 L303.8,320.78 L305.8,320.25 L307.8,319.71 L309.8,319.17 L311.8,318.61 L313.8,318.05 L315.8,317.47 L317.8,316.88 L319.8,316.28 L321.8,315.68 L323.8,315.07 L325.8,314.45 L327.8,313.83 L329.8,313.21 L331.8,312.58 L333.8,311.96 L335.8,311.33 L337.8,310.71 L339.8,310.08 L341.8,309.45 L343.8,308.81 L345.8,308.16 L347.8,307.50 L349.8,306.81 L351.8,306.10 L353.8,305.38 L355.8,304.64 L357.8,303.89 L359.8,303.13 L361.8,302.35 L363.8,301.57 L365.8,300.77 L367.8,299.97 L369.8,299.16 L371.8,298.37 L373.8,297.57 L375.8,296.77 L377.8,295.94 L379.8,295.08 L381.8,294.19 L383.8,293.29 L385.8,292.40 L387.8,291.57 L389.8,290.79 L391.8,290.07 L393.8,289.41 L395.8,288.79 L397.8,288.22 L399.8,287.68 L401.8,287.17 L403.8,286.70 L405.8,286.25 L407.8,285.84 L409.8,285.45 L411.8,285.10 L413.8,284.77 L415.8,284.46 L417.8,284.17 L419.8,283.91 L421.8,283.66 L423.8,283.44 L425.8,283.24 L427.8,283.06 L429.8,282.91 L431.8,282.77 L433.8,282.64 L435.8,282.51 L437.8,282.38 L439.8,282.25 L441.8,282.12 L443.8,281.99 L445.8,281.89 L447.8,281.81 L449.8,281.76 L451.8,281.73 L453.8,281.70 L455.8,281.66 L457.8,281.60 L459.8,281.51 L461.8,281.39 L463.8,281.25 L465.8,281.08 L467.8,280.89 L469.8,280.68 L471.8,280.45 L473.8,280.20 L475.8,279.94 L477.8,279.65 L479.8,279.35 L481.8,279.02 L483.8,278.68 L485.8,278.32 L487.8,277.94 L489.8,277.54 L491.8,277.14 L493.8,276.72 L495.8,276.30 L497.8,275.89 L499.8,275.48 L501.8,275.07 L503.8,274.68 L505.8,274.29 L507.8,273.90 L509.8,273.52 L511.8,273.13 L513.8,272.72 L515.8,272.27 L517.8,271.79 L519.8,271.27 L521.8,270.71 L523.8,270.13 L525.8,269.53 L527.8,268.93 L529.8,268.33 L531.8,267.74 L533.8,267.16 L535.8,266.60 L537.8,266.05 L539.8,265.52 L541.8,265.01 L543.8,264.50 L545.8,263.99 L547.8,263.49 L549.8,262.99 L551.8,262.49 L553.8,261.99 L555.8,261.49 L557.8,260.99 L559.8,260.50 L561.8,260.03 L563.8,259.57 L565.8,259.13 L567.8,258.74 L569.8,258.38 L571.8,258.05 L573.8,257.76 L575.8,257.48 L577.8,257.22 L579.8,256.97 L581.8,256.71 L583.8,256.45 L585.8,256.18 L587.8,255.88 L589.8,255.56 L591.8,255.20 L593.8,254.81 L595.8,254.40 L597.8,253.97 L599.8,253.52 L601.8,253.07 L603.8,252.62 L605.8,252.18 L607.8,251.75 L609.8,251.33 L611.8,250.93 L613.8,250.54 L615.8,250.16 L617.8,249.79 L619.8,249.44 L621.8,249.10 L623.8,248.77 L625.8,248.46 L627.8,248.16 L629.8,247.87 L631.8,247.60 L633.8,247.34 L635.8,247.10 L637.8,246.88 L639.8,246.67 L641.8,246.48 L643.8,246.29 L645.8,246.12 L647.8,245.95 L649.8,245.78 L651.8,245.62 L653.8,245.46 L655.8,245.30 L657.8,245.14 L659.8,244.98 L661.8,244.81 L663.8,244.64 L665.8,244.44 L667.8,244.21 L669.8,243.97 L671.8,243.69 L673.8,243.40 L675.8,243.08 L677.8,242.74 L679.8,242.37 L681.8,241.99 L683.8,241.61 L685.8,241.21 L687.8,240.81 L689.8,240.42 L691.8,240.03 L693.8,239.64 L695.8,239.26 L697.8,238.89 L699.8,238.54 L701.8,238.19 L703.8,237.85 L705.8,237.51 L707.8,237.17 L709.8,236.83 L711.8,236.47 L713.8,236.10 L715.8,235.70 L717.8,235.26 L719.8,234.78 L721.8,234.27 L723.8,233.74 L725.8,233.21 L727.8,232.69 L729.8,232.18 L731.8,231.69 L733.8,231.20 L735.8,230.71 L737.8,230.19 L739.8,229.65 L741.8,229.09 L743.8,228.51 L745.8,227.90 L747.8,227.28 L749.8,226.64 L751.8,225.99 L753.8,225.33 L755.8,224.67 L757.8,224.01 L759.8,223.35 L761.8,222.70 L763.8,222.07 L765.8,221.46 L767.8,220.87 L769.8,220.32 L771.8,219.79 L773.8,219.28 L775.8,218.80 L777.8,218.35 L779.8,217.91 L781.8,217.50 L783.8,217.12 L785.8,216.78 L787.8,216.46 L789.8,216.18 L791.8,215.92 L793.8,215.67 L795.8,215.42 L797.8,215.14 L799.8,214.85 L801.8,214.53 L803.8,214.21 L805.8,213.88 L807.8,213.56 L809.8,213.26 L811.8,212.96 L813.8,212.69 L815.8,212.43 L817.8,212.19 L819.8,211.96 L821.8,211.75 L823.8,211.56 L825.8,211.38 L827.8,211.22 L829.8,211.07 L831.8,210.93 L833.8,210.81 L835.8,210.71 L837.8,210.62 L839.8,210.55 L841.8,210.49 L843.8,210.44 L845.8,210.39 L847.8,210.34 L849.8,210.28 L851.8,210.21 L853.8,210.14 L855.8,210.05 L857.8,209.94 L859.8,209.82 L861.8,209.68 L863.8,209.53 L865.8,209.36 L867.8,209.20 L869.8,209.03 L871.8,208.86 L873.8,208.71 L875.8,208.57 L877.8,208.45 L879.8,208.35 L881.8,208.27 L883.8,208.22 L885.8,208.21 L887.8,208.23 L889.8,208.28 L891.8,208.37 L893.8,208.48 L895.8,208.62 L897.8,208.79 L899.8,208.98 L901.8,209.19 L903.8,209.42 L905.8,209.66 L907.8,209.90 L909.8,210.16 L911.8,210.43 L913.8,210.70 L915.8,210.98 L917.8,211.28 L919.8,211.58 L921.8,211.89 L923.8,212.20 L925.8,212.49 L927.8,212.77 L929.8,213.03 L931.8,213.25 L933.8,213.43 L935.8,213.57 L937.8,213.67 L939.8,213.73 L941.8,213.78 L943.8,213.83 L945.8,213.89 L947.8,213.98 L949.8,214.10 L951.8,214.25 L953.8,214.46 L955.8,214.71 L957.8,215.03 L959.8,215.40 L961.8,215.79 L963.8,216.21 L965.8,216.63 L967.8,217.05 L969.8,217.46 L971.8,217.86 L973.8,218.27 L975.8,218.67 L977.8,219.07 L979.8,219.48 L981.8,219.89 L983.8,220.30 L985.8,220.71 L987.8,221.10 L989.8,221.48 L991.8,221.84 L993.8,222.17 L995.8,222.49 L997.8,222.79 L999.8,223.09 L1001.8,223.38 L1003.8,223.65 L1005.8,223.92 L1007.8,224.18 L1009.8,224.45 L1011.8,224.75 L1013.8,225.12 L1015.8,225.55 L1017.8,226.06 L1019.8,226.61 L1021.8,227.21 L1023.8,227.84 L1025.8,228.48 L1027.8,229.13 L1029.8,229.78 L1031.8,230.43 L1033.8,231.07 L1035.8,231.70 L1037.8,232.32 L1039.8,232.93 L1041.8,233.52 L1043.8,234.09 L1045.8,234.65 L1047.8,235.19 L1049.8,235.72 L1051.8,236.24 L1053.8,236.76 L1055.8,237.27 L1057.8,237.79 L1059.8,238.32 L1061.8,238.84" fill="none" stroke="#9900ff" stroke-width="1.1"/><path d="M99.8,364.02 L101.8,363.16 L103.8,362.30 L105.8,361.45 L107.8,360.59 L109.8,359.72 L111.8,358.84 L113.8,357.96 L115.8,357.07 L117.8,356.16 L119.8,355.23 L121.8,354.26 L123.8,353.22 L125.8,352.14 L127.8,351.03 L129.8,349.90 L131.8,348.76 L133.8,347.57 L135.8,346.28 L137.8,344.83 L139.8,343.19 L141.8,341.38 L143.8,339.50 L145.8,337.61 L147.8,335.73 L149.8,333.89 L151.8,332.11 L153.8,330.41 L155.8,328.87 L157.8,327.57 L159.8,326.48 L161.8,325.49 L163.8,324.49 L165.8,323.43 L167.8,322.32 L169.8,321.18 L171.8,320.02 L173.8,318.84 L175.8,317.65 L177.8,316.44 L179.8,315.20 L181.8,313.91 L183.8,312.57 L185.8,311.23 L187.8,309.93 L189.8,308.75 L191.8,307.74 L193.8,306.85 L195.8,306.05 L197.8,305.33 L199.8,304.69 L201.8,304.13 L203.8,303.60 L205.8,303.10 L207.8,302.61 L209.8,302.17 L211.8,301.81 L213.8,301.58 L215.8,301.47 L217.8,301.45 L219.8,301.48 L221.8,301.54 L223.8,301.63 L225.8,301.73 L227.8,301.86 L229.8,302.03 L231.8,302.28 L233.8,302.64 L235.8,303.15 L237.8,303.77 L239.8,304.42 L241.8,304.95 L243.8,305.30 L245.8,305.48 L247.8,305.55 L249.8,305.59 L251.8,305.63 L253.8,305.66 L255.8,305.70 L257.8,305.75 L259.8,305.81 L261.8,305.88 L263.8,305.94 L265.8,306.01 L267.8,306.08 L269.8,306.14 L271.8,306.21 L273.8,306.26 L275.8,306.28 L277.8,306.24 L279.8,306.15 L281.8,305.99 L283.8,305.73 L285.8,305.33 L287.8,304.75 L289.8,304.03 L291.8,303.24 L293.8,302.43 L295.8,301.63 L297.8,300.86 L299.8,300.14 L301.8,299.47 L303.8,298.86 L305.8,298.26 L307.8,297.67 L309.8,297.06 L311.8,296.41 L313.8,295.73 L315.8,295.03 L317.8,294.31 L319.8,293.57 L321.8,292.81 L323.8,292.01 L325.8,291.18 L327.8,290.33 L329.8,289.42 L331.8,288.42 L333.8,287.32 L335.8,286.19 L337.8,285.10 L339.8,284.13 L341.8,283.29 L343.8,282.60 L345.8,282.04 L347.8,281.60 L349.8,281.23 L351.8,280.83 L353.8,280.31 L355.8,279.56 L357.8,278.53 L359.8,277.20 L361.8,275.68 L363.8,274.14 L365.8,272.71 L367.8,271.42 L369.8,270.25 L371.8,269.18 L373.8,268.24 L375.8,267.47 L377.8,266.86 L379.8,266.40 L381.8,266.10 L383.8,265.95 L385.8,265.92 L387.8,265.96 L389.8,266.01 L391.8,266.04 L393.8,266.03 L395.8,265.98 L397.8,265.88 L399.8,265.69 L401.8,265.38 L403.8,264.94 L405.8,264.40 L407.8,263.80 L409.8,263.15 L411.8,262.48 L413.8,261.82 L415.8,261.27 L417.8,260.91 L419.8,260.74 L421.8,260.72 L423.8,260.76 L425.8,260.81 L427.8,260.85 L429.8,260.87 L431.8,260.88 L433.8,260.88 L435.8,260.86 L437.8,260.81 L439.8,260.72 L441.8,260.60 L443.8,260.46 L445.8,260.33 L447.8,260.23 L449.8,260.20 L451.8,260.27 L453.8,260.45 L455.8,260.76 L457.8,261.23 L459.8,261.85 L461.8,262.57 L463.8,263.34 L465.8,264.13 L467.8,264.94 L469.8,265.73 L471.8,266.45 L473.8,267.03 L475.8,267.46 L477.8,267.71 L479.8,267.79 L481.8,267.66 L483.8,267.36 L485.8,266.92 L487.8,266.37 L489.8,265.74 L491.8,265.08 L493.8,264.48 L495.8,263.98 L497.8,263.58 L499.8,263.29 L501.8,263.10 L503.8,262.99 L505.8,262.91 L507.8,262.80 L509.8,262.62 L511.8,262.35 L513.8,261.96 L515.8,261.43 L517.8,260.75 L519.8,259.98 L521.8,259.16 L523.8,258.32 L525.8,257.49 L527.8,256.66 L529.8,255.84 L531.8,255.03 L533.8,254.22 L535.8,253.43 L537.8,252.67 L539.8,251.92 L541.8,251.17 L543.8,250.42 L545.8,249.63 L547.8,248.79 L549.8,247.90 L551.8,246.98 L553.8,246.05 L555.8,245.10 L557.8,244.13 L559.8,243.15 L561.8,242.17 L563.8,241.20 L565.8,240.30 L567.8,239.52 L569.8,238.91 L571.8,238.45 L573.8,238.14 L575.8,237.92 L577.8,237.76 L579.8,237.61 L581.8,237.44 L583.8,237.22 L585.8,236.95 L587.8,236.62 L589.8,236.20 L591.8,235.70 L593.8,235.16 L595.8,234.61 L597.8,234.08 L599.8,233.55 L601.8,233.04 L603.8,232.57 L605.8,232.17 L607.8,231.86 L609.8,231.63 L611.8,231.44 L613.8,231.28 L615.8,231.15 L617.8,231.03 L619.8,230.94 L621.8,230.87 L623.8,230.81 L625.8,230.76 L627.8,230.72 L629.8,230.70 L631.8,230.70 L633.8,230.70 L635.8,230.73 L637.8,230.78 L639.8,230.87 L641.8,230.98 L643.8,231.10 L645.8,231.20 L647.8,231.25 L649.8,231.24 L651.8,231.15 L653.8,230.97 L655.8,230.68 L657.8,230.28 L659.8,229.81 L661.8,229.29 L663.8,228.71 L665.8,228.08 L667.8,227.40 L669.8,226.69 L671.8,225.98 L673.8,225.29 L675.8,224.67 L677.8,224.12 L679.8,223.63 L681.8,223.19 L683.8,222.79 L685.8,222.44 L687.8,222.17 L689.8,221.97 L691.8,221.80 L693.8,221.65 L695.8,221.47 L697.8,221.24 L699.8,220.96 L701.8,220.65 L703.8,220.32 L705.8,219.97 L707.8,219.59 L709.8,219.19 L711.8,218.77 L713.8,218.33 L715.8,217.85 L717.8,217.31 L719.8,216.68 L721.8,215.98 L723.8,215.22 L725.8,214.40 L727.8,213.55 L729.8,212.67 L731.8,211.78 L733.8,210.87 L735.8,209.95 L737.8,209.02 L739.8,208.08 L741.8,207.15 L743.8,206.23 L745.8,205.32 L747.8,204.45 L749.8,203.60 L751.8,202.78 L753.8,202.00 L755.8,201.31 L757.8,200.74 L759.8,200.29 L761.8,199.92 L763.8,199.58 L765.8,199.24 L767.8,198.88 L769.8,198.46 L771.8,197.92 L773.8,197.23 L775.8,196.41 L777.8,195.56 L779.8,194.75 L781.8,194.03 L783.8,193.43 L785.8,192.98 L787.8,192.66 L789.8,192.42 L791.8,192.18 L793.8,191.92 L795.8,191.61 L797.8,191.24 L799.8,190.85 L801.8,190.43 L803.8,190.02 L805.8,189.65 L807.8,189.32 L809.8,189.02 L811.8,188.76 L813.8,188.55 L815.8,188.44 L817.8,188.47 L819.8,188.61 L821.8,188.82 L823.8,189.07 L825.8,189.36 L827.8,189.70 L829.8,190.09 L831.8,190.51 L833.8,190.96 L835.8,191.45 L837.8,191.99 L839.8,192.59 L841.8,193.24 L843.8,193.93 L845.8,194.69 L847.8,195.56 L849.8,196.55 L851.8,197.64 L853.8,198.75 L855.8,199.78 L857.8,200.64 L859.8,201.27 L861.8,201.70 L863.8,202.02 L865.8,202.32 L867.8,202.64 L869.8,203.05 L871.8,203.58 L873.8,204.22 L875.8,204.93 L877.8,205.68 L879.8,206.45 L881.8,207.25 L883.8,208.06 L885.8,208.93 L887.8,209.85 L889.8,210.86 L891.8,211.96 L893.8,213.19 L895.8,214.55 L897.8,216.00 L899.8,217.49 L901.8,218.98 L903.8,220.46 L905.8,221.90 L907.8,223.28 L909.8,224.61 L911.8,225.93 L913.8,227.27 L915.8,228.67 L917.8,230.10 L919.8,231.53 L921.8,232.90 L923.8,234.21 L925.8,235.45 L927.8,236.62 L929.8,237.70 L931.8,238.72 L933.8,239.65 L935.8,240.51 L937.8,241.29 L939.8,241.99 L941.8,242.60 L943.8,243.11 L945.8,243.52 L947.8,243.85 L949.8,244.11 L951.8,244.33 L953.8,244.56 L955.8,244.83 L957.8,245.20 L959.8,245.67 L961.8,246.23 L963.8,246.89 L965.8,247.64 L967.8,248.46 L969.8,249.32 L971.8,250.20 L973.8,251.09 L975.8,251.99 L977.8,252.88 L979.8,253.77 L981.8,254.63 L983.8,255.42 L985.8,256.13 L987.8,256.74 L989.8,257.21 L991.8,257.54 L993.8,257.70 L995.8,257.73 L997.8,257.68 L999.8,257.57 L1001.8,257.44 L1003.8,257.33 L1005.8,257.31 L1007.8,257.43 L1009.8,257.66 L1011.8,257.96 L1013.8,258.29 L1015.8,258.63 L1017.8,258.94 L1019.8,259.21 L1021.8,259.40 L1023.8,259.50 L1025.8,259.55 L1027.8,259.60 L1029.8,259.67 L1031.8,259.79 L1033.8,259.98 L1035.8,260.29 L1037.8,260.72 L1039.8,261.25 L1041.8,261.84 L1043.8,262.48 L1045.8,263.14 L1047.8,263.80 L1049.8,264.47 L1051.8,265.12 L1053.8,265.76 L1055.8,266.35 L1057.8,266.89 L1059.8,267.38 L1061.8,267.84" fill="none" stroke="#009999" stroke-width="1.1"/><path d="M99.8,354.36 L101.8,352.58 L103.8,350.80 L105.8,349.00 L107.8,346.88 L109.8,343.97 L111.8,340.80 L113.8,337.81 L115.8,336.27 L117.8,335.97 L119.8,334.40 L121.8,331.33 L123.8,328.05 L125.8,324.80 L127.8,321.88 L129.8,319.53 L131.8,317.34 L133.8,315.15 L135.8,312.95 L137.8,310.62 L139.8,308.10 L141.8,305.55 L143.8,303.00 L145.8,300.46 L147.8,298.00 L149.8,295.65 L151.8,293.31 L153.8,290.97 L155.8,288.87 L157.8,288.64 L159.8,290.28 L161.8,292.16 L163.8,294.01 L165.8,295.69 L167.8,297.05 L169.8,298.31 L171.8,299.48 L173.8,299.85 L175.8,299.26 L177.8,298.45 L179.8,297.29 L181.8,295.63 L183.8,294.01 L185.8,293.26 L187.8,293.27 L189.8,294.14 L191.8,295.83 L193.8,297.67 L195.8,299.57 L197.8,301.56 L199.8,303.55 L201.8,305.43 L203.8,306.95 L205.8,308.24 L207.8,308.84 L209.8,308.45 L211.8,308.00 L213.8,308.58 L215.8,309.98 L217.8,311.48 L219.8,312.98 L221.8,314.48 L223.8,315.98 L225.8,317.38 L227.8,318.27 L229.8,318.75 L231.8,319.18 L233.8,319.59 L235.8,319.87 L237.8,319.92 L239.8,319.91 L241.8,319.46 L243.8,317.65 L245.8,315.16 L247.8,312.21 L249.8,308.47 L251.8,304.60 L253.8,301.62 L255.8,299.51 L257.8,297.53 L259.8,296.13 L261.8,296.23 L263.8,296.92 L265.8,297.99 L267.8,299.51 L269.8,301.10 L271.8,302.68 L273.8,303.48 L275.8,302.25 L277.8,300.27 L279.8,298.20 L281.8,295.52 L283.8,292.27 L285.8,289.24 L287.8,287.10 L289.8,285.35 L291.8,283.21 L293.8,280.39 L295.8,277.65 L297.8,276.15 L299.8,275.67 L301.8,275.30 L303.8,274.95 L305.8,274.81 L307.8,274.99 L309.8,275.25 L311.8,275.54 L313.8,275.91 L315.8,276.33 L317.8,276.75 L319.8,277.16 L321.8,277.48 L323.8,277.70 L325.8,277.90 L327.8,278.10 L329.8,278.18 L331.8,277.96 L333.8,277.59 L335.8,276.86 L337.8,275.69 L339.8,274.44 L341.8,273.24 L343.8,272.17 L345.8,271.16 L347.8,270.18 L349.8,269.32 L351.8,268.62 L353.8,267.77 L355.8,266.24 L357.8,264.27 L359.8,262.08 L361.8,259.53 L363.8,256.83 L365.8,253.83 L367.8,250.54 L369.8,247.42 L371.8,244.96 L373.8,242.93 L375.8,241.87 L377.8,242.11 L379.8,242.93 L381.8,244.74 L383.8,247.11 L385.8,249.69 L387.8,252.59 L389.8,255.61 L391.8,258.78 L393.8,262.08 L395.8,264.99 L397.8,266.64 L399.8,267.64 L401.8,268.15 L403.8,267.99 L405.8,267.54 L407.8,266.53 L409.8,265.08 L411.8,263.58 L413.8,262.03 L415.8,260.39 L417.8,258.86 L419.8,258.38 L421.8,258.92 L423.8,259.73 L425.8,261.00 L427.8,262.48 L429.8,263.97 L431.8,265.36 L433.8,266.64 L435.8,267.88 L437.8,269.03 L439.8,269.86 L441.8,270.47 L443.8,270.29 L445.8,268.91 L447.8,267.27 L449.8,266.12 L451.8,265.87 L453.8,265.89 L455.8,266.25 L457.8,267.10 L459.8,268.15 L461.8,269.65 L463.8,271.59 L465.8,273.47 L467.8,274.99 L469.8,276.28 L471.8,277.00 L473.8,276.88 L475.8,276.35 L477.8,274.86 L479.8,272.61 L481.8,270.05 L483.8,266.93 L485.8,263.60 L487.8,260.27 L489.8,256.94 L491.8,253.74 L493.8,251.06 L495.8,248.74 L497.8,247.08 L499.8,246.68 L501.8,246.72 L503.8,247.22 L505.8,248.16 L507.8,248.92 L509.8,248.96 L511.8,248.63 L513.8,247.94 L515.8,246.12 L517.8,243.68 L519.8,241.32 L521.8,239.16 L523.8,237.09 L525.8,235.22 L527.8,233.64 L529.8,232.21 L531.8,231.38 L533.8,231.11 L535.8,230.98 L537.8,231.07 L539.8,231.23 L541.8,231.12 L543.8,230.56 L545.8,229.78 L547.8,228.46 L549.8,226.72 L551.8,225.09 L553.8,223.92 L555.8,222.96 L557.8,222.40 L559.8,222.31 L561.8,222.56 L563.8,223.72 L565.8,225.51 L567.8,227.95 L569.8,231.56 L571.8,235.50 L573.8,238.99 L575.8,242.04 L577.8,244.75 L579.8,246.57 L581.8,247.51 L583.8,246.51 L585.8,244.12 L587.8,241.57 L589.8,238.94 L591.8,236.15 L593.8,233.31 L595.8,230.49 L597.8,227.67 L599.8,224.93 L601.8,223.17 L603.8,223.61 L605.8,224.87 L607.8,226.41 L609.8,228.03 L611.8,229.28 L613.8,229.96 L615.8,230.42 L617.8,230.53 L619.8,230.36 L621.8,230.06 L623.8,229.49 L625.8,228.81 L627.8,228.00 L629.8,227.03 L631.8,226.04 L633.8,225.40 L635.8,225.83 L637.8,226.79 L639.8,227.79 L641.8,228.73 L643.8,229.61 L645.8,230.37 L647.8,230.77 L649.8,230.89 L651.8,230.48 L653.8,229.05 L655.8,227.31 L657.8,225.54 L659.8,223.59 L661.8,221.20 L663.8,218.67 L665.8,216.24 L667.8,213.96 L669.8,211.72 L671.8,209.75 L673.8,209.11 L675.8,209.49 L677.8,210.01 L679.8,210.73 L681.8,211.85 L683.8,213.10 L685.8,214.32 L687.8,215.43 L689.8,216.42 L691.8,216.98 L693.8,216.40 L695.8,215.44 L697.8,214.73 L699.8,214.34 L701.8,214.12 L703.8,214.30 L705.8,214.74 L707.8,215.13 L709.8,215.37 L711.8,215.45 L713.8,214.54 L715.8,212.66 L717.8,210.44 L719.8,207.55 L721.8,204.32 L723.8,201.07 L725.8,197.77 L727.8,194.44 L729.8,191.24 L731.8,188.58 L733.8,186.32 L735.8,184.65 L737.8,183.83 L739.8,183.28 L741.8,183.23 L743.8,183.63 L745.8,183.95 L747.8,183.84 L749.8,183.52 L751.8,183.19 L753.8,182.85 L755.8,182.54 L757.8,182.32 L759.8,182.19 L761.8,182.34 L763.8,183.20 L765.8,184.34 L767.8,185.56 L769.8,186.87 L771.8,188.16 L773.8,189.28 L775.8,190.26 L777.8,190.87 L779.8,190.77 L781.8,190.46 L783.8,190.30 L785.8,190.28 L787.8,190.36 L789.8,190.68 L791.8,191.12 L793.8,191.58 L795.8,192.20 L797.8,193.01 L799.8,193.86 L801.8,194.64 L803.8,194.85 L805.8,194.37 L807.8,193.77 L809.8,193.20 L811.8,192.69 L813.8,192.20 L815.8,191.83 L817.8,191.87 L819.8,192.11 L821.8,192.37 L823.8,192.73 L825.8,193.21 L827.8,193.71 L829.8,194.39 L831.8,195.61 L833.8,197.09 L835.8,198.58 L837.8,199.97 L839.8,201.25 L841.8,202.50 L843.8,203.84 L845.8,205.45 L847.8,207.19 L849.8,209.01 L851.8,211.44 L853.8,214.62 L855.8,217.82 L857.8,220.51 L859.8,222.82 L861.8,224.39 L863.8,224.53 L865.8,224.21 L867.8,223.88 L869.8,223.59 L871.8,223.44 L873.8,223.38 L875.8,223.34 L877.8,223.45 L879.8,223.72 L881.8,224.02 L883.8,224.33 L885.8,224.76 L887.8,225.56 L889.8,226.56 L891.8,227.68 L893.8,228.98 L895.8,230.65 L897.8,233.91 L899.8,238.43 L901.8,243.10 L903.8,247.77 L905.8,252.37 L907.8,256.46 L909.8,259.91 L911.8,262.88 L913.8,264.49 L915.8,265.20 L917.8,265.38 L919.8,264.68 L921.8,263.70 L923.8,262.87 L925.8,262.20 L927.8,261.87 L929.8,262.57 L931.8,263.78 L933.8,264.85 L935.8,264.34 L937.8,261.89 L939.8,259.04 L941.8,256.11 L943.8,252.87 L945.8,249.40 L947.8,245.97 L949.8,243.13 L951.8,241.00 L953.8,239.24 L955.8,238.32 L957.8,237.99 L959.8,238.35 L961.8,239.95 L963.8,241.96 L965.8,244.12 L967.8,246.44 L969.8,248.83 L971.8,251.41 L973.8,254.06 L975.8,256.60 L977.8,258.98 L979.8,261.23 L981.8,263.11 L983.8,264.66 L985.8,265.89 L987.8,266.32 L989.8,266.46 L991.8,266.47 L993.8,266.36 L995.8,266.13 L997.8,265.52 L999.8,264.70 L1001.8,264.18 L1003.8,264.30 L1005.8,264.64 L1007.8,265.20 L1009.8,265.99 L1011.8,266.83 L1013.8,267.82 L1015.8,269.19 L1017.8,270.65 L1019.8,271.60 L1021.8,271.80 L1023.8,271.77 L1025.8,271.58 L1027.8,271.25 L1029.8,270.85 L1031.8,270.25 L1033.8,269.59 L1035.8,268.92 L1037.8,268.26 L1039.8,267.73 L1041.8,267.71 L1043.8,268.02 L1045.8,268.45 L1047.8,269.06 L1049.8,269.72 L1051.8,270.39 L1053.8,271.05 L1055.8,271.58 L1057.8,271.68 L1059.8,271.57 L1061.8,271.44" fill="none" stroke="#ff0000" stroke-width="1.1"/><rect x="87" y="387" width="990" height="1" fill="#b8bcc0"/><rect x="87" y="388" width="990" height="1" fill="#9ca5ab"/><rect x="87" y="389" width="990" height="21" fill="#d8dfe6"/><rect x="86" y="410" width="991" height="22.5" fill="#adbac4"/><rect x="86" y="410" width="991" height="1" fill="#7c8892"/><rect x="86" y="410" width="1" height="22" fill="#7c8892"/><rect x="1076" y="410" width="1" height="22" fill="#7c8892"/><rect x="86" y="431.5" width="991" height="1" fill="#8e9aa4"/><rect x="87" y="432" width="990" height="168" fill="#fff"/><line x1="87" y1="451.5" x2="1077" y2="451.5" stroke="#e8e8e8"/><line x1="87" y1="481.5" x2="1077" y2="481.5" stroke="#e8e8e8"/><line x1="87" y1="510.5" x2="1077" y2="510.5" stroke="#e8e8e8"/><line x1="87" y1="540.5" x2="1077" y2="540.5" stroke="#e8e8e8"/><line x1="87" y1="570.5" x2="1077" y2="570.5" stroke="#e8e8e8"/><line x1="139.5" y1="432" x2="139.5" y2="600" stroke="#e8e8e8"/><line x1="214.5" y1="432" x2="214.5" y2="600" stroke="#e8e8e8"/><line x1="297.5" y1="432" x2="297.5" y2="600" stroke="#e8e8e8"/><line x1="380.5" y1="432" x2="380.5" y2="600" stroke="#e8e8e8"/><line x1="451.5" y1="432" x2="451.5" y2="600" stroke="#e8e8e8"/><line x1="538.5" y1="432" x2="538.5" y2="600" stroke="#e8e8e8"/><line x1="625.5" y1="432" x2="625.5" y2="600" stroke="#e8e8e8"/><line x1="708.5" y1="432" x2="708.5" y2="600" stroke="#e8e8e8"/><line x1="783.5" y1="432" x2="783.5" y2="600" stroke="#e8e8e8"/><line x1="866.5" y1="432" x2="866.5" y2="600" stroke="#e8e8e8"/><line x1="941.5" y1="432" x2="941.5" y2="600" stroke="#e8e8e8"/><line x1="1024.5" y1="432" x2="1024.5" y2="600" stroke="#d8cba5"/><rect x="97.80" y="595.0" width="4" height="5.0" fill="#a8e6e6"/><rect x="98.40" y="595.0" width="2.8" height="5.0" fill="#00c4c4"/><rect x="101.75" y="557.8" width="4" height="42.2" fill="#a8e6e6"/><rect x="102.35" y="557.8" width="2.8" height="42.2" fill="#00c4c4"/><rect x="105.70" y="550.8" width="4" height="49.2" fill="#a8e6e6"/><rect x="106.30" y="550.8" width="2.8" height="49.2" fill="#00c4c4"/><rect x="109.65" y="494.2" width="4" height="105.8" fill="#a8e6e6"/><rect x="110.25" y="494.2" width="2.8" height="105.8" fill="#00c4c4"/><rect x="113.60" y="528.2" width="4" height="71.8" fill="#a8e6e6"/><rect x="114.20" y="528.2" width="2.8" height="71.8" fill="#00c4c4"/><rect x="117.55" y="520.8" width="4" height="79.2" fill="#a8e6e6"/><rect x="118.15" y="520.8" width="2.8" height="79.2" fill="#00c4c4"/><rect x="121.51" y="524.1" width="4" height="75.9" fill="#a8e6e6"/><rect x="122.11" y="524.1" width="2.8" height="75.9" fill="#00c4c4"/><rect x="125.46" y="560.4" width="4" height="39.6" fill="#a8e6e6"/><rect x="126.06" y="560.4" width="2.8" height="39.6" fill="#00c4c4"/><rect x="129.41" y="544.1" width="4" height="55.9" fill="#a8e6e6"/><rect x="130.01" y="544.1" width="2.8" height="55.9" fill="#00c4c4"/><rect x="133.36" y="565.2" width="4" height="34.8" fill="#a8e6e6"/><rect x="133.96" y="565.2" width="2.8" height="34.8" fill="#00c4c4"/><rect x="137.31" y="494.9" width="4" height="105.1" fill="#a8e6e6"/><rect x="137.91" y="494.9" width="2.8" height="105.1" fill="#00c4c4"/><rect x="141.26" y="474.6" width="4" height="125.4" fill="#a8e6e6"/><rect x="141.86" y="474.6" width="2.8" height="125.4" fill="#00c4c4"/><rect x="145.21" y="524.1" width="4" height="75.9" fill="#a8e6e6"/><rect x="145.81" y="524.1" width="2.8" height="75.9" fill="#00c4c4"/><rect x="149.16" y="563.0" width="4" height="37.0" fill="#a8e6e6"/><rect x="149.76" y="563.0" width="2.8" height="37.0" fill="#00c4c4"/><rect x="153.11" y="576.0" width="4" height="24.1" fill="#a8e6e6"/><rect x="153.71" y="576.0" width="2.8" height="24.1" fill="#00c4c4"/><rect x="157.06" y="585.9" width="4" height="14.1" fill="#a8e6e6"/><rect x="157.66" y="585.9" width="2.8" height="14.1" fill="#00c4c4"/><rect x="161.02" y="576.3" width="4" height="23.7" fill="#a8e6e6"/><rect x="161.62" y="576.3" width="2.8" height="23.7" fill="#00c4c4"/><rect x="164.97" y="560.0" width="4" height="40.0" fill="#a8e6e6"/><rect x="165.57" y="560.0" width="2.8" height="40.0" fill="#00c4c4"/><rect x="168.92" y="584.1" width="4" height="15.9" fill="#a8e6e6"/><rect x="169.52" y="584.1" width="2.8" height="15.9" fill="#00c4c4"/><rect x="172.87" y="593.3" width="4" height="6.7" fill="#a8e6e6"/><rect x="173.47" y="593.3" width="2.8" height="6.7" fill="#00c4c4"/><rect x="176.82" y="585.2" width="4" height="14.8" fill="#a8e6e6"/><rect x="177.42" y="585.2" width="2.8" height="14.8" fill="#00c4c4"/><rect x="180.77" y="582.2" width="4" height="17.8" fill="#a8e6e6"/><rect x="181.37" y="582.2" width="2.8" height="17.8" fill="#00c4c4"/><rect x="184.72" y="589.1" width="4" height="10.9" fill="#a8e6e6"/><rect x="185.32" y="589.1" width="2.8" height="10.9" fill="#00c4c4"/><rect x="188.67" y="585.6" width="4" height="14.4" fill="#a8e6e6"/><rect x="189.27" y="585.6" width="2.8" height="14.4" fill="#00c4c4"/><rect x="192.62" y="585.6" width="4" height="14.4" fill="#a8e6e6"/><rect x="193.22" y="585.6" width="2.8" height="14.4" fill="#00c4c4"/><rect x="196.57" y="590.0" width="4" height="10.0" fill="#a8e6e6"/><rect x="197.17" y="590.0" width="2.8" height="10.0" fill="#00c4c4"/><rect x="200.53" y="590.4" width="4" height="9.6" fill="#a8e6e6"/><rect x="201.13" y="590.4" width="2.8" height="9.6" fill="#00c4c4"/><rect x="204.48" y="593.3" width="4" height="6.7" fill="#a8e6e6"/><rect x="205.08" y="593.3" width="2.8" height="6.7" fill="#00c4c4"/><rect x="208.43" y="589.1" width="4" height="10.9" fill="#a8e6e6"/><rect x="209.03" y="589.1" width="2.8" height="10.9" fill="#00c4c4"/><rect x="212.38" y="595.4" width="4" height="4.6" fill="#a8e6e6"/><rect x="212.98" y="595.4" width="2.8" height="4.6" fill="#00c4c4"/><rect x="216.33" y="589.1" width="4" height="10.9" fill="#a8e6e6"/><rect x="216.93" y="589.1" width="2.8" height="10.9" fill="#00c4c4"/><rect x="220.28" y="590.4" width="4" height="9.6" fill="#a8e6e6"/><rect x="220.88" y="590.4" width="2.8" height="9.6" fill="#00c4c4"/><rect x="224.23" y="583.4" width="4" height="16.7" fill="#a8e6e6"/><rect x="224.83" y="583.4" width="2.8" height="16.7" fill="#00c4c4"/><rect x="228.18" y="589.1" width="4" height="10.9" fill="#a8e6e6"/><rect x="228.78" y="589.1" width="2.8" height="10.9" fill="#00c4c4"/><rect x="232.13" y="587.0" width="4" height="13.0" fill="#a8e6e6"/><rect x="232.73" y="587.0" width="2.8" height="13.0" fill="#00c4c4"/><rect x="236.08" y="587.0" width="4" height="13.0" fill="#a8e6e6"/><rect x="236.68" y="587.0" width="2.8" height="13.0" fill="#00c4c4"/><rect x="240.04" y="559.7" width="4" height="40.3" fill="#a8e6e6"/><rect x="240.64" y="559.7" width="2.8" height="40.3" fill="#00c4c4"/><rect x="243.99" y="582.2" width="4" height="17.8" fill="#a8e6e6"/><rect x="244.59" y="582.2" width="2.8" height="17.8" fill="#00c4c4"/><rect x="247.94" y="565.6" width="4" height="34.4" fill="#a8e6e6"/><rect x="248.54" y="565.6" width="2.8" height="34.4" fill="#00c4c4"/><rect x="251.89" y="575.2" width="4" height="24.8" fill="#a8e6e6"/><rect x="252.49" y="575.2" width="2.8" height="24.8" fill="#00c4c4"/><rect x="255.84" y="589.3" width="4" height="10.7" fill="#a8e6e6"/><rect x="256.44" y="589.3" width="2.8" height="10.7" fill="#00c4c4"/><rect x="259.79" y="579.3" width="4" height="20.7" fill="#a8e6e6"/><rect x="260.39" y="579.3" width="2.8" height="20.7" fill="#00c4c4"/><rect x="263.74" y="587.4" width="4" height="12.6" fill="#a8e6e6"/><rect x="264.34" y="587.4" width="2.8" height="12.6" fill="#00c4c4"/><rect x="267.69" y="587.4" width="4" height="12.6" fill="#a8e6e6"/><rect x="268.29" y="587.4" width="2.8" height="12.6" fill="#00c4c4"/><rect x="271.64" y="583.4" width="4" height="16.7" fill="#a8e6e6"/><rect x="272.24" y="583.4" width="2.8" height="16.7" fill="#00c4c4"/><rect x="275.60" y="577.4" width="4" height="22.6" fill="#a8e6e6"/><rect x="276.20" y="577.4" width="2.8" height="22.6" fill="#00c4c4"/><rect x="279.55" y="579.3" width="4" height="20.7" fill="#a8e6e6"/><rect x="280.15" y="579.3" width="2.8" height="20.7" fill="#00c4c4"/><rect x="283.50" y="587.0" width="4" height="13.0" fill="#a8e6e6"/><rect x="284.10" y="587.0" width="2.8" height="13.0" fill="#00c4c4"/><rect x="287.45" y="592.6" width="4" height="7.4" fill="#a8e6e6"/><rect x="288.05" y="592.6" width="2.8" height="7.4" fill="#00c4c4"/><rect x="291.40" y="544.1" width="4" height="55.9" fill="#a8e6e6"/><rect x="292.00" y="544.1" width="2.8" height="55.9" fill="#00c4c4"/><rect x="295.35" y="529.0" width="4" height="71.0" fill="#a8e6e6"/><rect x="295.95" y="529.0" width="2.8" height="71.0" fill="#00c4c4"/><rect x="299.30" y="552.6" width="4" height="47.4" fill="#a8e6e6"/><rect x="299.90" y="552.6" width="2.8" height="47.4" fill="#00c4c4"/><rect x="303.25" y="571.1" width="4" height="28.9" fill="#a8e6e6"/><rect x="303.85" y="571.1" width="2.8" height="28.9" fill="#00c4c4"/><rect x="307.20" y="590.4" width="4" height="9.6" fill="#a8e6e6"/><rect x="307.80" y="590.4" width="2.8" height="9.6" fill="#00c4c4"/><rect x="311.15" y="591.5" width="4" height="8.5" fill="#a8e6e6"/><rect x="311.75" y="591.5" width="2.8" height="8.5" fill="#00c4c4"/><rect x="315.11" y="567.4" width="4" height="32.6" fill="#a8e6e6"/><rect x="315.71" y="567.4" width="2.8" height="32.6" fill="#00c4c4"/><rect x="319.06" y="589.3" width="4" height="10.7" fill="#a8e6e6"/><rect x="319.66" y="589.3" width="2.8" height="10.7" fill="#00c4c4"/><rect x="323.01" y="580.4" width="4" height="19.6" fill="#a8e6e6"/><rect x="323.61" y="580.4" width="2.8" height="19.6" fill="#00c4c4"/><rect x="326.96" y="587.4" width="4" height="12.6" fill="#a8e6e6"/><rect x="327.56" y="587.4" width="2.8" height="12.6" fill="#00c4c4"/><rect x="330.91" y="576.0" width="4" height="24.1" fill="#a8e6e6"/><rect x="331.51" y="576.0" width="2.8" height="24.1" fill="#00c4c4"/><rect x="334.86" y="569.3" width="4" height="30.7" fill="#a8e6e6"/><rect x="335.46" y="569.3" width="2.8" height="30.7" fill="#00c4c4"/><rect x="338.81" y="552.3" width="4" height="47.7" fill="#a8e6e6"/><rect x="339.41" y="552.3" width="2.8" height="47.7" fill="#00c4c4"/><rect x="342.76" y="564.9" width="4" height="35.1" fill="#a8e6e6"/><rect x="343.36" y="564.9" width="2.8" height="35.1" fill="#00c4c4"/><rect x="346.71" y="578.2" width="4" height="21.8" fill="#a8e6e6"/><rect x="347.31" y="578.2" width="2.8" height="21.8" fill="#00c4c4"/><rect x="350.66" y="586.3" width="4" height="13.7" fill="#a8e6e6"/><rect x="351.26" y="586.3" width="2.8" height="13.7" fill="#00c4c4"/><rect x="354.62" y="576.0" width="4" height="24.1" fill="#a8e6e6"/><rect x="355.22" y="576.0" width="2.8" height="24.1" fill="#00c4c4"/><rect x="358.57" y="543.4" width="4" height="56.6" fill="#a8e6e6"/><rect x="359.17" y="543.4" width="2.8" height="56.6" fill="#00c4c4"/><rect x="362.52" y="531.9" width="4" height="68.1" fill="#a8e6e6"/><rect x="363.12" y="531.9" width="2.8" height="68.1" fill="#00c4c4"/><rect x="366.47" y="546.4" width="4" height="53.7" fill="#a8e6e6"/><rect x="367.07" y="546.4" width="2.8" height="53.7" fill="#00c4c4"/><rect x="370.42" y="583.4" width="4" height="16.7" fill="#a8e6e6"/><rect x="371.02" y="583.4" width="2.8" height="16.7" fill="#00c4c4"/><rect x="374.37" y="583.0" width="4" height="17.0" fill="#a8e6e6"/><rect x="374.97" y="583.0" width="2.8" height="17.0" fill="#00c4c4"/><rect x="378.32" y="577.1" width="4" height="22.9" fill="#a8e6e6"/><rect x="378.92" y="577.1" width="2.8" height="22.9" fill="#00c4c4"/><rect x="382.27" y="586.7" width="4" height="13.3" fill="#a8e6e6"/><rect x="382.87" y="586.7" width="2.8" height="13.3" fill="#00c4c4"/><rect x="386.22" y="580.0" width="4" height="20.0" fill="#a8e6e6"/><rect x="386.82" y="580.0" width="2.8" height="20.0" fill="#00c4c4"/><rect x="390.17" y="581.1" width="4" height="18.9" fill="#a8e6e6"/><rect x="390.77" y="581.1" width="2.8" height="18.9" fill="#00c4c4"/><rect x="394.12" y="587.0" width="4" height="13.0" fill="#a8e6e6"/><rect x="394.73" y="587.0" width="2.8" height="13.0" fill="#00c4c4"/><rect x="398.08" y="579.3" width="4" height="20.7" fill="#a8e6e6"/><rect x="398.68" y="579.3" width="2.8" height="20.7" fill="#00c4c4"/><rect x="402.03" y="584.5" width="4" height="15.5" fill="#a8e6e6"/><rect x="402.63" y="584.5" width="2.8" height="15.5" fill="#00c4c4"/><rect x="405.98" y="586.3" width="4" height="13.7" fill="#a8e6e6"/><rect x="406.58" y="586.3" width="2.8" height="13.7" fill="#00c4c4"/><rect x="409.93" y="578.5" width="4" height="21.5" fill="#a8e6e6"/><rect x="410.53" y="578.5" width="2.8" height="21.5" fill="#00c4c4"/><rect x="413.88" y="586.3" width="4" height="13.7" fill="#a8e6e6"/><rect x="414.48" y="586.3" width="2.8" height="13.7" fill="#00c4c4"/><rect x="417.83" y="589.3" width="4" height="10.7" fill="#a8e6e6"/><rect x="418.43" y="589.3" width="2.8" height="10.7" fill="#00c4c4"/><rect x="421.78" y="591.5" width="4" height="8.5" fill="#a8e6e6"/><rect x="422.38" y="591.5" width="2.8" height="8.5" fill="#00c4c4"/><rect x="425.73" y="593.3" width="4" height="6.7" fill="#a8e6e6"/><rect x="426.33" y="593.3" width="2.8" height="6.7" fill="#00c4c4"/><rect x="429.68" y="586.3" width="4" height="13.7" fill="#a8e6e6"/><rect x="430.28" y="586.3" width="2.8" height="13.7" fill="#00c4c4"/><rect x="433.63" y="585.9" width="4" height="14.1" fill="#a8e6e6"/><rect x="434.24" y="585.9" width="2.8" height="14.1" fill="#00c4c4"/><rect x="437.59" y="580.0" width="4" height="20.0" fill="#a8e6e6"/><rect x="438.19" y="580.0" width="2.8" height="20.0" fill="#00c4c4"/><rect x="441.54" y="588.9" width="4" height="11.1" fill="#a8e6e6"/><rect x="442.14" y="588.9" width="2.8" height="11.1" fill="#00c4c4"/><rect x="445.49" y="566.3" width="4" height="33.7" fill="#a8e6e6"/><rect x="446.09" y="566.3" width="2.8" height="33.7" fill="#00c4c4"/><rect x="449.44" y="586.3" width="4" height="13.7" fill="#a8e6e6"/><rect x="450.04" y="586.3" width="2.8" height="13.7" fill="#00c4c4"/><rect x="453.39" y="579.3" width="4" height="20.7" fill="#a8e6e6"/><rect x="453.99" y="579.3" width="2.8" height="20.7" fill="#00c4c4"/><rect x="457.34" y="584.1" width="4" height="15.9" fill="#a8e6e6"/><rect x="457.94" y="584.1" width="2.8" height="15.9" fill="#00c4c4"/><rect x="461.29" y="562.3" width="4" height="37.7" fill="#a8e6e6"/><rect x="461.89" y="562.3" width="2.8" height="37.7" fill="#00c4c4"/><rect x="465.24" y="560.4" width="4" height="39.6" fill="#a8e6e6"/><rect x="465.84" y="560.4" width="2.8" height="39.6" fill="#00c4c4"/><rect x="469.19" y="573.0" width="4" height="27.0" fill="#a8e6e6"/><rect x="469.79" y="573.0" width="2.8" height="27.0" fill="#00c4c4"/><rect x="473.15" y="554.9" width="4" height="45.1" fill="#a8e6e6"/><rect x="473.75" y="554.9" width="2.8" height="45.1" fill="#00c4c4"/><rect x="477.10" y="533.0" width="4" height="67.0" fill="#a8e6e6"/><rect x="477.70" y="533.0" width="2.8" height="67.0" fill="#00c4c4"/><rect x="481.05" y="570.4" width="4" height="29.6" fill="#a8e6e6"/><rect x="481.65" y="570.4" width="2.8" height="29.6" fill="#00c4c4"/><rect x="485.00" y="545.2" width="4" height="54.8" fill="#a8e6e6"/><rect x="485.60" y="545.2" width="2.8" height="54.8" fill="#00c4c4"/><rect x="488.95" y="580.4" width="4" height="19.6" fill="#a8e6e6"/><rect x="489.55" y="580.4" width="2.8" height="19.6" fill="#00c4c4"/><rect x="492.90" y="591.9" width="4" height="8.1" fill="#a8e6e6"/><rect x="493.50" y="591.9" width="2.8" height="8.1" fill="#00c4c4"/><rect x="496.85" y="568.2" width="4" height="31.8" fill="#a8e6e6"/><rect x="497.45" y="568.2" width="2.8" height="31.8" fill="#00c4c4"/><rect x="500.80" y="588.9" width="4" height="11.1" fill="#a8e6e6"/><rect x="501.40" y="588.9" width="2.8" height="11.1" fill="#00c4c4"/><rect x="504.75" y="591.9" width="4" height="8.1" fill="#a8e6e6"/><rect x="505.35" y="591.9" width="2.8" height="8.1" fill="#00c4c4"/><rect x="508.70" y="584.1" width="4" height="15.9" fill="#a8e6e6"/><rect x="509.30" y="584.1" width="2.8" height="15.9" fill="#00c4c4"/><rect x="512.65" y="572.2" width="4" height="27.8" fill="#a8e6e6"/><rect x="513.25" y="572.2" width="2.8" height="27.8" fill="#00c4c4"/><rect x="516.61" y="544.9" width="4" height="55.1" fill="#a8e6e6"/><rect x="517.21" y="544.9" width="2.8" height="55.1" fill="#00c4c4"/><rect x="520.56" y="550.4" width="4" height="49.6" fill="#a8e6e6"/><rect x="521.16" y="550.4" width="2.8" height="49.6" fill="#00c4c4"/><rect x="524.51" y="565.2" width="4" height="34.8" fill="#a8e6e6"/><rect x="525.11" y="565.2" width="2.8" height="34.8" fill="#00c4c4"/><rect x="528.46" y="587.0" width="4" height="13.0" fill="#a8e6e6"/><rect x="529.06" y="587.0" width="2.8" height="13.0" fill="#00c4c4"/><rect x="532.41" y="581.1" width="4" height="18.9" fill="#a8e6e6"/><rect x="533.01" y="581.1" width="2.8" height="18.9" fill="#00c4c4"/><rect x="536.36" y="592.2" width="4" height="7.8" fill="#a8e6e6"/><rect x="536.96" y="592.2" width="2.8" height="7.8" fill="#00c4c4"/><rect x="540.31" y="584.1" width="4" height="15.9" fill="#a8e6e6"/><rect x="540.91" y="584.1" width="2.8" height="15.9" fill="#00c4c4"/><rect x="544.26" y="551.2" width="4" height="48.8" fill="#a8e6e6"/><rect x="544.86" y="551.2" width="2.8" height="48.8" fill="#00c4c4"/><rect x="548.21" y="557.1" width="4" height="42.9" fill="#a8e6e6"/><rect x="548.81" y="557.1" width="2.8" height="42.9" fill="#00c4c4"/><rect x="552.16" y="573.4" width="4" height="26.6" fill="#a8e6e6"/><rect x="552.76" y="573.4" width="2.8" height="26.6" fill="#00c4c4"/><rect x="556.12" y="577.8" width="4" height="22.2" fill="#a8e6e6"/><rect x="556.72" y="577.8" width="2.8" height="22.2" fill="#00c4c4"/><rect x="560.07" y="574.8" width="4" height="25.2" fill="#a8e6e6"/><rect x="560.67" y="574.8" width="2.8" height="25.2" fill="#00c4c4"/><rect x="564.02" y="580.8" width="4" height="19.2" fill="#a8e6e6"/><rect x="564.62" y="580.8" width="2.8" height="19.2" fill="#00c4c4"/><rect x="567.97" y="580.8" width="4" height="19.2" fill="#a8e6e6"/><rect x="568.57" y="580.8" width="2.8" height="19.2" fill="#00c4c4"/><rect x="571.92" y="589.3" width="4" height="10.7" fill="#a8e6e6"/><rect x="572.52" y="589.3" width="2.8" height="10.7" fill="#00c4c4"/><rect x="575.87" y="588.9" width="4" height="11.1" fill="#a8e6e6"/><rect x="576.47" y="588.9" width="2.8" height="11.1" fill="#00c4c4"/><rect x="579.82" y="569.3" width="4" height="30.7" fill="#a8e6e6"/><rect x="580.42" y="569.3" width="2.8" height="30.7" fill="#00c4c4"/><rect x="583.77" y="585.9" width="4" height="14.1" fill="#a8e6e6"/><rect x="584.37" y="585.9" width="2.8" height="14.1" fill="#00c4c4"/><rect x="587.72" y="591.5" width="4" height="8.5" fill="#a8e6e6"/><rect x="588.32" y="591.5" width="2.8" height="8.5" fill="#00c4c4"/><rect x="591.67" y="592.2" width="4" height="7.8" fill="#a8e6e6"/><rect x="592.27" y="592.2" width="2.8" height="7.8" fill="#00c4c4"/><rect x="595.63" y="593.3" width="4" height="6.7" fill="#a8e6e6"/><rect x="596.23" y="593.3" width="2.8" height="6.7" fill="#00c4c4"/><rect x="599.58" y="586.3" width="4" height="13.7" fill="#a8e6e6"/><rect x="600.18" y="586.3" width="2.8" height="13.7" fill="#00c4c4"/><rect x="603.53" y="587.0" width="4" height="13.0" fill="#a8e6e6"/><rect x="604.13" y="587.0" width="2.8" height="13.0" fill="#00c4c4"/><rect x="607.48" y="580.0" width="4" height="20.0" fill="#a8e6e6"/><rect x="608.08" y="580.0" width="2.8" height="20.0" fill="#00c4c4"/><rect x="611.43" y="582.6" width="4" height="17.4" fill="#a8e6e6"/><rect x="612.03" y="582.6" width="2.8" height="17.4" fill="#00c4c4"/><rect x="615.38" y="564.9" width="4" height="35.1" fill="#a8e6e6"/><rect x="615.98" y="564.9" width="2.8" height="35.1" fill="#00c4c4"/><rect x="619.33" y="548.6" width="4" height="51.4" fill="#a8e6e6"/><rect x="619.93" y="548.6" width="2.8" height="51.4" fill="#00c4c4"/><rect x="623.28" y="589.6" width="4" height="10.4" fill="#a8e6e6"/><rect x="623.88" y="589.6" width="2.8" height="10.4" fill="#00c4c4"/><rect x="627.23" y="539.3" width="4" height="60.7" fill="#a8e6e6"/><rect x="627.83" y="539.3" width="2.8" height="60.7" fill="#00c4c4"/><rect x="631.18" y="559.7" width="4" height="40.3" fill="#a8e6e6"/><rect x="631.78" y="559.7" width="2.8" height="40.3" fill="#00c4c4"/><rect x="635.14" y="559.7" width="4" height="40.3" fill="#a8e6e6"/><rect x="635.74" y="559.7" width="2.8" height="40.3" fill="#00c4c4"/><rect x="639.09" y="564.1" width="4" height="35.9" fill="#a8e6e6"/><rect x="639.69" y="564.1" width="2.8" height="35.9" fill="#00c4c4"/><rect x="643.04" y="587.0" width="4" height="13.0" fill="#a8e6e6"/><rect x="643.64" y="587.0" width="2.8" height="13.0" fill="#00c4c4"/><rect x="646.99" y="577.1" width="4" height="22.9" fill="#a8e6e6"/><rect x="647.59" y="577.1" width="2.8" height="22.9" fill="#00c4c4"/><rect x="650.94" y="580.4" width="4" height="19.6" fill="#a8e6e6"/><rect x="651.54" y="580.4" width="2.8" height="19.6" fill="#00c4c4"/><rect x="654.89" y="571.9" width="4" height="28.1" fill="#a8e6e6"/><rect x="655.49" y="571.9" width="2.8" height="28.1" fill="#00c4c4"/><rect x="658.84" y="556.0" width="4" height="44.0" fill="#a8e6e6"/><rect x="659.44" y="556.0" width="2.8" height="44.0" fill="#00c4c4"/><rect x="662.79" y="546.0" width="4" height="54.0" fill="#a8e6e6"/><rect x="663.39" y="546.0" width="2.8" height="54.0" fill="#00c4c4"/><rect x="666.74" y="558.2" width="4" height="41.8" fill="#a8e6e6"/><rect x="667.34" y="558.2" width="2.8" height="41.8" fill="#00c4c4"/><rect x="670.69" y="582.2" width="4" height="17.8" fill="#a8e6e6"/><rect x="671.29" y="582.2" width="2.8" height="17.8" fill="#00c4c4"/><rect x="674.65" y="582.6" width="4" height="17.4" fill="#a8e6e6"/><rect x="675.25" y="582.6" width="2.8" height="17.4" fill="#00c4c4"/><rect x="678.60" y="578.9" width="4" height="21.1" fill="#a8e6e6"/><rect x="679.20" y="578.9" width="2.8" height="21.1" fill="#00c4c4"/><rect x="682.55" y="593.0" width="4" height="7.0" fill="#a8e6e6"/><rect x="683.15" y="593.0" width="2.8" height="7.0" fill="#00c4c4"/><rect x="686.50" y="583.4" width="4" height="16.7" fill="#a8e6e6"/><rect x="687.10" y="583.4" width="2.8" height="16.7" fill="#00c4c4"/><rect x="690.45" y="580.0" width="4" height="20.0" fill="#a8e6e6"/><rect x="691.05" y="580.0" width="2.8" height="20.0" fill="#00c4c4"/><rect x="694.40" y="581.9" width="4" height="18.1" fill="#a8e6e6"/><rect x="695.00" y="581.9" width="2.8" height="18.1" fill="#00c4c4"/><rect x="698.35" y="584.1" width="4" height="15.9" fill="#a8e6e6"/><rect x="698.95" y="584.1" width="2.8" height="15.9" fill="#00c4c4"/><rect x="702.30" y="591.9" width="4" height="8.1" fill="#a8e6e6"/><rect x="702.90" y="591.9" width="2.8" height="8.1" fill="#00c4c4"/><rect x="706.25" y="595.0" width="4" height="5.0" fill="#a8e6e6"/><rect x="706.85" y="595.0" width="2.8" height="5.0" fill="#00c4c4"/><rect x="710.20" y="592.2" width="4" height="7.8" fill="#a8e6e6"/><rect x="710.80" y="592.2" width="2.8" height="7.8" fill="#00c4c4"/><rect x="714.16" y="573.7" width="4" height="26.3" fill="#a8e6e6"/><rect x="714.76" y="573.7" width="2.8" height="26.3" fill="#00c4c4"/><rect x="718.11" y="531.9" width="4" height="68.1" fill="#a8e6e6"/><rect x="718.71" y="531.9" width="2.8" height="68.1" fill="#00c4c4"/><rect x="722.06" y="555.2" width="4" height="44.8" fill="#a8e6e6"/><rect x="722.66" y="555.2" width="2.8" height="44.8" fill="#00c4c4"/><rect x="726.01" y="567.8" width="4" height="32.2" fill="#a8e6e6"/><rect x="726.61" y="567.8" width="2.8" height="32.2" fill="#00c4c4"/><rect x="729.96" y="580.8" width="4" height="19.2" fill="#a8e6e6"/><rect x="730.56" y="580.8" width="2.8" height="19.2" fill="#00c4c4"/><rect x="733.91" y="587.4" width="4" height="12.6" fill="#a8e6e6"/><rect x="734.51" y="587.4" width="2.8" height="12.6" fill="#00c4c4"/><rect x="737.86" y="585.2" width="4" height="14.8" fill="#a8e6e6"/><rect x="738.46" y="585.2" width="2.8" height="14.8" fill="#00c4c4"/><rect x="741.81" y="591.9" width="4" height="8.1" fill="#a8e6e6"/><rect x="742.41" y="591.9" width="2.8" height="8.1" fill="#00c4c4"/><rect x="745.76" y="569.7" width="4" height="30.3" fill="#a8e6e6"/><rect x="746.36" y="569.7" width="2.8" height="30.3" fill="#00c4c4"/><rect x="749.71" y="577.1" width="4" height="22.9" fill="#a8e6e6"/><rect x="750.31" y="577.1" width="2.8" height="22.9" fill="#00c4c4"/><rect x="753.67" y="588.5" width="4" height="11.5" fill="#a8e6e6"/><rect x="754.27" y="588.5" width="2.8" height="11.5" fill="#00c4c4"/><rect x="757.62" y="592.6" width="4" height="7.4" fill="#a8e6e6"/><rect x="758.22" y="592.6" width="2.8" height="7.4" fill="#00c4c4"/><rect x="761.57" y="584.8" width="4" height="15.2" fill="#a8e6e6"/><rect x="762.17" y="584.8" width="2.8" height="15.2" fill="#00c4c4"/><rect x="765.52" y="588.9" width="4" height="11.1" fill="#a8e6e6"/><rect x="766.12" y="588.9" width="2.8" height="11.1" fill="#00c4c4"/><rect x="769.47" y="586.3" width="4" height="13.7" fill="#a8e6e6"/><rect x="770.07" y="586.3" width="2.8" height="13.7" fill="#00c4c4"/><rect x="773.42" y="590.4" width="4" height="9.6" fill="#a8e6e6"/><rect x="774.02" y="590.4" width="2.8" height="9.6" fill="#00c4c4"/><rect x="777.37" y="590.8" width="4" height="9.2" fill="#a8e6e6"/><rect x="777.97" y="590.8" width="2.8" height="9.2" fill="#00c4c4"/><rect x="781.32" y="588.2" width="4" height="11.8" fill="#a8e6e6"/><rect x="781.92" y="588.2" width="2.8" height="11.8" fill="#00c4c4"/><rect x="785.27" y="591.9" width="4" height="8.1" fill="#a8e6e6"/><rect x="785.87" y="591.9" width="2.8" height="8.1" fill="#00c4c4"/><rect x="789.23" y="593.7" width="4" height="6.3" fill="#a8e6e6"/><rect x="789.83" y="593.7" width="2.8" height="6.3" fill="#00c4c4"/><rect x="793.18" y="587.4" width="4" height="12.6" fill="#a8e6e6"/><rect x="793.78" y="587.4" width="2.8" height="12.6" fill="#00c4c4"/><rect x="797.13" y="587.4" width="4" height="12.6" fill="#a8e6e6"/><rect x="797.73" y="587.4" width="2.8" height="12.6" fill="#00c4c4"/><rect x="801.08" y="593.0" width="4" height="7.0" fill="#a8e6e6"/><rect x="801.68" y="593.0" width="2.8" height="7.0" fill="#00c4c4"/><rect x="805.03" y="591.9" width="4" height="8.1" fill="#a8e6e6"/><rect x="805.63" y="591.9" width="2.8" height="8.1" fill="#00c4c4"/><rect x="808.98" y="589.3" width="4" height="10.7" fill="#a8e6e6"/><rect x="809.58" y="589.3" width="2.8" height="10.7" fill="#00c4c4"/><rect x="812.93" y="589.6" width="4" height="10.4" fill="#a8e6e6"/><rect x="813.53" y="589.6" width="2.8" height="10.4" fill="#00c4c4"/><rect x="816.88" y="590.0" width="4" height="10.0" fill="#a8e6e6"/><rect x="817.48" y="590.0" width="2.8" height="10.0" fill="#00c4c4"/><rect x="820.83" y="590.0" width="4" height="10.0" fill="#a8e6e6"/><rect x="821.43" y="590.0" width="2.8" height="10.0" fill="#00c4c4"/><rect x="824.78" y="593.0" width="4" height="7.0" fill="#a8e6e6"/><rect x="825.38" y="593.0" width="2.8" height="7.0" fill="#00c4c4"/><rect x="828.74" y="591.5" width="4" height="8.5" fill="#a8e6e6"/><rect x="829.34" y="591.5" width="2.8" height="8.5" fill="#00c4c4"/><rect x="832.69" y="592.2" width="4" height="7.8" fill="#a8e6e6"/><rect x="833.29" y="592.2" width="2.8" height="7.8" fill="#00c4c4"/><rect x="836.64" y="593.3" width="4" height="6.7" fill="#a8e6e6"/><rect x="837.24" y="593.3" width="2.8" height="6.7" fill="#00c4c4"/><rect x="840.59" y="590.4" width="4" height="9.6" fill="#a8e6e6"/><rect x="841.19" y="590.4" width="2.8" height="9.6" fill="#00c4c4"/><rect x="844.54" y="580.0" width="4" height="20.0" fill="#a8e6e6"/><rect x="845.14" y="580.0" width="2.8" height="20.0" fill="#00c4c4"/><rect x="848.49" y="580.4" width="4" height="19.6" fill="#a8e6e6"/><rect x="849.09" y="580.4" width="2.8" height="19.6" fill="#00c4c4"/><rect x="852.44" y="574.5" width="4" height="25.5" fill="#a8e6e6"/><rect x="853.04" y="574.5" width="2.8" height="25.5" fill="#00c4c4"/><rect x="856.39" y="578.5" width="4" height="21.5" fill="#a8e6e6"/><rect x="856.99" y="578.5" width="2.8" height="21.5" fill="#00c4c4"/><rect x="860.34" y="581.9" width="4" height="18.1" fill="#a8e6e6"/><rect x="860.94" y="581.9" width="2.8" height="18.1" fill="#00c4c4"/><rect x="864.29" y="587.4" width="4" height="12.6" fill="#a8e6e6"/><rect x="864.89" y="587.4" width="2.8" height="12.6" fill="#00c4c4"/><rect x="868.25" y="575.6" width="4" height="24.4" fill="#a8e6e6"/><rect x="868.85" y="575.6" width="2.8" height="24.4" fill="#00c4c4"/><rect x="872.20" y="558.6" width="4" height="41.4" fill="#a8e6e6"/><rect x="872.80" y="558.6" width="2.8" height="41.4" fill="#00c4c4"/><rect x="876.15" y="533.0" width="4" height="67.0" fill="#a8e6e6"/><rect x="876.75" y="533.0" width="2.8" height="67.0" fill="#00c4c4"/><rect x="880.10" y="571.9" width="4" height="28.1" fill="#a8e6e6"/><rect x="880.70" y="571.9" width="2.8" height="28.1" fill="#00c4c4"/><rect x="884.05" y="573.4" width="4" height="26.6" fill="#a8e6e6"/><rect x="884.65" y="573.4" width="2.8" height="26.6" fill="#00c4c4"/><rect x="888.00" y="586.3" width="4" height="13.7" fill="#a8e6e6"/><rect x="888.60" y="586.3" width="2.8" height="13.7" fill="#00c4c4"/><rect x="891.95" y="580.4" width="4" height="19.6" fill="#a8e6e6"/><rect x="892.55" y="580.4" width="2.8" height="19.6" fill="#00c4c4"/><rect x="895.90" y="572.6" width="4" height="27.4" fill="#a8e6e6"/><rect x="896.50" y="572.6" width="2.8" height="27.4" fill="#00c4c4"/><rect x="899.85" y="549.3" width="4" height="50.7" fill="#a8e6e6"/><rect x="900.45" y="549.3" width="2.8" height="50.7" fill="#00c4c4"/><rect x="903.80" y="558.9" width="4" height="41.1" fill="#a8e6e6"/><rect x="904.40" y="558.9" width="2.8" height="41.1" fill="#00c4c4"/><rect x="907.75" y="570.8" width="4" height="29.2" fill="#a8e6e6"/><rect x="908.36" y="570.8" width="2.8" height="29.2" fill="#00c4c4"/><rect x="911.71" y="570.0" width="4" height="30.0" fill="#a8e6e6"/><rect x="912.31" y="570.0" width="2.8" height="30.0" fill="#00c4c4"/><rect x="915.66" y="578.5" width="4" height="21.5" fill="#a8e6e6"/><rect x="916.26" y="578.5" width="2.8" height="21.5" fill="#00c4c4"/><rect x="919.61" y="593.3" width="4" height="6.7" fill="#a8e6e6"/><rect x="920.21" y="593.3" width="2.8" height="6.7" fill="#00c4c4"/><rect x="923.56" y="587.4" width="4" height="12.6" fill="#a8e6e6"/><rect x="924.16" y="587.4" width="2.8" height="12.6" fill="#00c4c4"/><rect x="927.51" y="590.0" width="4" height="10.0" fill="#a8e6e6"/><rect x="928.11" y="590.0" width="2.8" height="10.0" fill="#00c4c4"/><rect x="931.46" y="580.4" width="4" height="19.6" fill="#a8e6e6"/><rect x="932.06" y="580.4" width="2.8" height="19.6" fill="#00c4c4"/><rect x="935.41" y="573.4" width="4" height="26.6" fill="#a8e6e6"/><rect x="936.01" y="573.4" width="2.8" height="26.6" fill="#00c4c4"/><rect x="939.36" y="578.2" width="4" height="21.8" fill="#a8e6e6"/><rect x="939.96" y="578.2" width="2.8" height="21.8" fill="#00c4c4"/><rect x="943.31" y="579.3" width="4" height="20.7" fill="#a8e6e6"/><rect x="943.91" y="579.3" width="2.8" height="20.7" fill="#00c4c4"/><rect x="947.26" y="589.3" width="4" height="10.7" fill="#a8e6e6"/><rect x="947.87" y="589.3" width="2.8" height="10.7" fill="#00c4c4"/><rect x="951.22" y="590.4" width="4" height="9.6" fill="#a8e6e6"/><rect x="951.82" y="590.4" width="2.8" height="9.6" fill="#00c4c4"/><rect x="955.17" y="590.4" width="4" height="9.6" fill="#a8e6e6"/><rect x="955.77" y="590.4" width="2.8" height="9.6" fill="#00c4c4"/><rect x="959.12" y="594.1" width="4" height="5.9" fill="#a8e6e6"/><rect x="959.72" y="594.1" width="2.8" height="5.9" fill="#00c4c4"/><rect x="963.07" y="591.3" width="4" height="8.7" fill="#a8e6e6"/><rect x="963.67" y="591.3" width="2.8" height="8.7" fill="#00c4c4"/><rect x="967.02" y="582.6" width="4" height="17.4" fill="#a8e6e6"/><rect x="967.62" y="582.6" width="2.8" height="17.4" fill="#00c4c4"/><rect x="970.97" y="568.9" width="4" height="31.1" fill="#a8e6e6"/><rect x="971.57" y="568.9" width="2.8" height="31.1" fill="#00c4c4"/><rect x="974.92" y="589.8" width="4" height="10.2" fill="#a8e6e6"/><rect x="975.52" y="589.8" width="2.8" height="10.2" fill="#00c4c4"/><rect x="978.87" y="579.3" width="4" height="20.7" fill="#a8e6e6"/><rect x="979.47" y="579.3" width="2.8" height="20.7" fill="#00c4c4"/><rect x="982.82" y="561.1" width="4" height="38.9" fill="#a8e6e6"/><rect x="983.42" y="561.1" width="2.8" height="38.9" fill="#00c4c4"/><rect x="986.77" y="529.3" width="4" height="70.7" fill="#a8e6e6"/><rect x="987.38" y="529.3" width="2.8" height="70.7" fill="#00c4c4"/><rect x="990.73" y="551.5" width="4" height="48.5" fill="#a8e6e6"/><rect x="991.33" y="551.5" width="2.8" height="48.5" fill="#00c4c4"/><rect x="994.68" y="549.3" width="4" height="50.7" fill="#a8e6e6"/><rect x="995.28" y="549.3" width="2.8" height="50.7" fill="#00c4c4"/><rect x="998.63" y="534.1" width="4" height="65.9" fill="#a8e6e6"/><rect x="999.23" y="534.1" width="2.8" height="65.9" fill="#00c4c4"/><rect x="1002.58" y="558.9" width="4" height="41.1" fill="#a8e6e6"/><rect x="1003.18" y="558.9" width="2.8" height="41.1" fill="#00c4c4"/><rect x="1006.53" y="570.8" width="4" height="29.2" fill="#a8e6e6"/><rect x="1007.13" y="570.8" width="2.8" height="29.2" fill="#00c4c4"/><rect x="1010.48" y="566.3" width="4" height="33.7" fill="#a8e6e6"/><rect x="1011.08" y="566.3" width="2.8" height="33.7" fill="#00c4c4"/><rect x="1014.43" y="563.0" width="4" height="37.0" fill="#a8e6e6"/><rect x="1015.03" y="563.0" width="2.8" height="37.0" fill="#00c4c4"/><rect x="1018.38" y="567.1" width="4" height="32.9" fill="#a8e6e6"/><rect x="1018.98" y="567.1" width="2.8" height="32.9" fill="#00c4c4"/><rect x="1022.33" y="583.0" width="4" height="17.0" fill="#a8e6e6"/><rect x="1022.93" y="583.0" width="2.8" height="17.0" fill="#00c4c4"/><rect x="1026.29" y="572.2" width="4" height="27.8" fill="#a8e6e6"/><rect x="1026.88" y="572.2" width="2.8" height="27.8" fill="#00c4c4"/><rect x="1030.24" y="583.9" width="4" height="16.1" fill="#a8e6e6"/><rect x="1030.84" y="583.9" width="2.8" height="16.1" fill="#00c4c4"/><rect x="1034.19" y="577.1" width="4" height="22.9" fill="#a8e6e6"/><rect x="1034.79" y="577.1" width="2.8" height="22.9" fill="#00c4c4"/><rect x="1038.14" y="579.3" width="4" height="20.7" fill="#a8e6e6"/><rect x="1038.74" y="579.3" width="2.8" height="20.7" fill="#00c4c4"/><rect x="1042.09" y="575.2" width="4" height="24.8" fill="#a8e6e6"/><rect x="1042.69" y="575.2" width="2.8" height="24.8" fill="#00c4c4"/><rect x="1046.04" y="589.8" width="4" height="10.2" fill="#a8e6e6"/><rect x="1046.64" y="589.8" width="2.8" height="10.2" fill="#00c4c4"/><rect x="1049.99" y="585.0" width="4" height="15.0" fill="#a8e6e6"/><rect x="1050.59" y="585.0" width="2.8" height="15.0" fill="#00c4c4"/><rect x="1053.94" y="578.9" width="4" height="21.1" fill="#a8e6e6"/><rect x="1054.54" y="578.9" width="2.8" height="21.1" fill="#00c4c4"/><rect x="1057.89" y="575.6" width="4" height="24.4" fill="#a8e6e6"/><rect x="1058.49" y="575.6" width="2.8" height="24.4" fill="#00c4c4"/><rect x="1061.84" y="556.3" width="4" height="43.7" fill="#a8e6e6"/><rect x="1062.44" y="556.3" width="2.8" height="43.7" fill="#00c4c4"/><path d="M99.9,564.3 L111.0,564.3 L115.2,571.3 L131.0,571.3 L135.2,566.2 L150.9,566.2 L155.1,571.3 L166.7,571.3 L169.8,573.0 L190.7,574.5 L206.2,574.5 L210.2,578.4 L225.7,578.4 L230.3,573.3 L244.6,573.3 L248.1,574.5 L261.8,574.5 L265.8,571.3 L277.3,571.3" fill="none" stroke="#ff0000" stroke-width="1.2"/><path d="M285.4,568.6 L301.1,568.6 L305.0,573.3 L321.3,573.3 L324.0,574.4 L340.3,574.4 L344.8,579.4 L360.5,579.4 L365.0,571.3 L375.2,571.3 L379.8,574.2 L383.7,574.2" fill="none" stroke="#ff0000" stroke-width="1.2"/><path d="M407.9,569.3 L422.9,569.3 L426.1,570.3 L443.1,570.3 L446.4,567.0 L462.7,567.0 L465.0,563.1 L466.6,559.2 L470.0,559.2 L482.6,559.2 L486.5,573.3 L502.2,573.3 L504.8,574.4 L521.8,574.4 L525.0,576.4 L542.0,576.4 L545.3,573.3 L561.6,573.3 L565.7,563.3 L581.6,563.3 L585.2,566.2 L599.0,566.2 L601.4,565.4 L616.8,565.4 L620.9,546.6 L637.1,546.6 L640.7,534.4 L656.9,534.4 L660.0,553.6 L676.6,555.2 L680.5,567.4 L697.5,567.4 L699.6,566.2 L715.9,566.2 L719.9,561.4 L735.7,561.4 L739.4,564.4 L763.0,564.4" fill="none" stroke="#ff0000" stroke-width="1.2"/><path d="M787.0,563.3 L803.6,563.3 L806.0,562.2 L818.2,562.2 L821.9,560.4 L837.7,560.4 L842.0,556.5 L850.0,556.5 L858.0,556.5 L861.7,551.3 L874.2,551.3 L878.0,538.5 L893.4,538.5 L897.8,543.5 L913.5,543.5 L917.2,548.2 L929.1,548.2 L932.7,545.5 L948.4,545.0 L952.6,550.3 L968.4,550.3 L972.0,546.3 L988.0,546.3 L992.6,524.7 L1004.1,524.7 L1007.7,502.6 L1015.7,502.6 L1019.9,489.3 L1027.7,489.3" fill="none" stroke="#ff0000" stroke-width="1.2"/><path d="M1039.9,491.4 L1051.4,491.4 L1056.0,485.3 L1063.6,485.3" fill="none" stroke="#ff0000" stroke-width="1.2"/><rect x="893" y="598" width="24" height="2" fill="#0000ff"/><rect x="86" y="600.5" width="991" height="21" fill="#adbac4"/><rect x="86" y="600.5" width="1" height="21" fill="#7c8892"/><rect x="1076" y="600.5" width="1" height="21" fill="#7c8892"/><rect x="86" y="621" width="991" height="1" fill="#7c8892"/><rect x="87" y="622" width="990" height="6" fill="#e3e9ee"/></svg>
<svg class="a" style="left:0;top:0;font-family:'Liberation Sans',sans-serif" width="1151" height="628"><text x="83.5" y="375.0" font-size="14" text-anchor="end" fill="#000" >10</text><text x="1079.5" y="375.0" font-size="14" text-anchor="start" fill="#000" >10</text><text x="83.5" y="348.1" font-size="14" text-anchor="end" fill="#000" >12</text><text x="1079.5" y="348.1" font-size="14" text-anchor="start" fill="#000" >12</text><text x="83.5" y="321.2" font-size="14" text-anchor="end" fill="#000" >14</text><text x="1079.5" y="321.2" font-size="14" text-anchor="start" fill="#000" >14</text><text x="83.5" y="294.3" font-size="14" text-anchor="end" fill="#000" >16</text><text x="1079.5" y="294.3" font-size="14" text-anchor="start" fill="#000" >16</text><text x="83.5" y="267.4" font-size="14" text-anchor="end" fill="#000" >18</text><text x="1079.5" y="267.4" font-size="14" text-anchor="start" fill="#000" >18</text><text x="83.5" y="240.5" font-size="14" text-anchor="end" fill="#000" >20</text><text x="1079.5" y="240.5" font-size="14" text-anchor="start" fill="#000" >20</text><text x="83.5" y="213.6" font-size="14" text-anchor="end" fill="#000" >22</text><text x="1079.5" y="213.6" font-size="14" text-anchor="start" fill="#000" >22</text><text x="83.5" y="186.7" font-size="14" text-anchor="end" fill="#000" >24</text><text x="1079.5" y="186.7" font-size="14" text-anchor="start" fill="#000" >24</text><text x="83.5" y="159.8" font-size="14" text-anchor="end" fill="#000" >26</text><text x="1079.5" y="159.8" font-size="14" text-anchor="start" fill="#000" >26</text><text x="83.5" y="132.9" font-size="14" text-anchor="end" fill="#000" >28</text><text x="1079.5" y="132.9" font-size="14" text-anchor="start" fill="#000" >28</text><text x="83.5" y="106.0" font-size="14" text-anchor="end" fill="#000" >30</text><text x="1079.5" y="106.0" font-size="14" text-anchor="start" fill="#000" >30</text><text x="82.5" y="604.5" font-size="14" text-anchor="end" fill="#000" >0</text><text x="1083" y="604.5" font-size="14" text-anchor="start" fill="#000" >0</text><text x="82.5" y="574.7" font-size="14" text-anchor="end" fill="#000" >8</text><text x="1083" y="574.7" font-size="14" text-anchor="start" fill="#000" >8</text><text x="82.5" y="544.9" font-size="14" text-anchor="end" fill="#000" >16</text><text x="1083" y="544.9" font-size="14" text-anchor="start" fill="#000" >16</text><text x="82.5" y="515.0" font-size="14" text-anchor="end" fill="#000" >24</text><text x="1083" y="515.0" font-size="14" text-anchor="start" fill="#000" >24</text><text x="82.5" y="485.2" font-size="14" text-anchor="end" fill="#000" >32</text><text x="1083" y="485.2" font-size="14" text-anchor="start" fill="#000" >32</text><text x="82.5" y="455.3" font-size="14" text-anchor="end" fill="#000" >40</text><text x="1083" y="455.3" font-size="14" text-anchor="start" fill="#000" >40</text><text x="82.5" y="393.0" font-size="12.5" text-anchor="end" fill="#000" >万円</text><text x="1081" y="393.0" font-size="12.5" text-anchor="start" fill="#000" >万円</text><text x="82.5" y="620.5" font-size="13.5" text-anchor="end" fill="#000" >百株</text><text x="1083" y="620.5" font-size="13.5" text-anchor="start" fill="#000" >百株</text><text x="92.5" y="429.0" font-size="12" text-anchor="start" fill="#000" >月</text><text x="92.5" y="618.0" font-size="12" text-anchor="start" fill="#000" >年</text><text x="139.5" y="429.3" font-size="13.5" text-anchor="middle" fill="#000" >02</text><text x="214.5" y="429.3" font-size="13.5" text-anchor="middle" fill="#000" >03</text><text x="297.5" y="429.3" font-size="13.5" text-anchor="middle" fill="#000" >04</text><text x="380.5" y="429.3" font-size="13.5" text-anchor="middle" fill="#000" >05</text><text x="451.5" y="429.3" font-size="13.5" text-anchor="middle" fill="#000" >06</text><text x="538.5" y="429.3" font-size="13.5" text-anchor="middle" fill="#000" >07</text><text x="625.5" y="429.3" font-size="13.5" text-anchor="middle" fill="#000" >08</text><text x="708.5" y="429.3" font-size="13.5" text-anchor="middle" fill="#000" >09</text><text x="783.5" y="429.3" font-size="13.5" text-anchor="middle" fill="#000" >10</text><text x="866.5" y="429.3" font-size="13.5" text-anchor="middle" fill="#000" >11</text><text x="941.5" y="429.3" font-size="13.5" text-anchor="middle" fill="#000" >12</text><text x="1023" y="429.3" font-size="13.5" text-anchor="middle" fill="#000" >01</text><text x="562.3" y="616.8" font-size="13.5" text-anchor="middle" fill="#000" >2009</text><text x="1045" y="616.8" font-size="13.5" text-anchor="middle" fill="#000" >2010</text></svg>

<div class="a" style="left:856px;top:81.5px;width:221px;height:18.5px;background:#e6e6e6;border:2px solid #aab9c4"></div>
<div class="a" style="left:860px;top:84px;font-size:13px;line-height:13px;letter-spacing:0.45px">2009/01/19</div>
<svg class="a" style="left:955px;top:84px" width="20" height="10"><path d="M3.3,6.4 L6,4.4 L8,4.3 L10,4.8 L12,5.6 L13.5,5.6 L16.3,4" fill="none" stroke="#000" stroke-width="1.1"/></svg>
<div class="a" style="left:976px;top:84px;font-size:13px;line-height:13px;letter-spacing:0.45px">2010/01/19</div>
<div class="a" style="left:908px;top:317px;width:167.5px;height:71px;border:1.5px solid #9fb0bc;background:rgba(233,238,241,0.93)"></div>
<div class="a" style="left:909.5px;top:318.5px;width:164.5px;height:16px;background:#d2dce2;border-bottom:1px solid #aab8c2"></div>
<div class="a" style="left:1058px;top:320px;width:14px;height:12px;background:#d3d9dd;border:1px solid #858e95"></div>
<div class="a" style="left:1061px;top:325px;width:8px;height:1px;background:#9aa3aa"></div>
<div class="a" style="left:900px;top:338.0px;width:35px;text-align:right;font-size:13px;line-height:13px;color:#ff0000">5</div><div class="a" style="left:938px;top:339.5px;font-size:11px;line-height:12px;color:#ff0000;-webkit-text-stroke:0.4px #ff0000">日</div><div class="a" style="left:990px;top:338.0px;width:65px;text-align:right;font-size:13px;line-height:13px;color:#ff0000;letter-spacing:0.2px">174,400</div><div class="a" style="left:1056.5px;top:339.5px;font-size:11px;line-height:12px;color:#ff0000;-webkit-text-stroke:0.4px #ff0000">円</div><div class="a" style="left:900px;top:354.1px;width:35px;text-align:right;font-size:13px;line-height:13px;color:#009999">25</div><div class="a" style="left:938px;top:355.6px;font-size:11px;line-height:12px;color:#009999;-webkit-text-stroke:0.4px #009999">日</div><div class="a" style="left:990px;top:354.1px;width:65px;text-align:right;font-size:13px;line-height:13px;color:#009999;letter-spacing:0.2px">177,508</div><div class="a" style="left:1056.5px;top:355.6px;font-size:11px;line-height:12px;color:#009999;-webkit-text-stroke:0.4px #009999">円</div><div class="a" style="left:900px;top:370.8px;width:35px;text-align:right;font-size:13px;line-height:13px;color:#9900ff">75</div><div class="a" style="left:938px;top:372.3px;font-size:11px;line-height:12px;color:#9900ff;-webkit-text-stroke:0.4px #9900ff">日</div><div class="a" style="left:990px;top:370.8px;width:65px;text-align:right;font-size:13px;line-height:13px;color:#9900ff;letter-spacing:0.2px">200,006</div><div class="a" style="left:1056.5px;top:372.3px;font-size:11px;line-height:12px;color:#9900ff;-webkit-text-stroke:0.4px #9900ff">円</div>
</body></html>
